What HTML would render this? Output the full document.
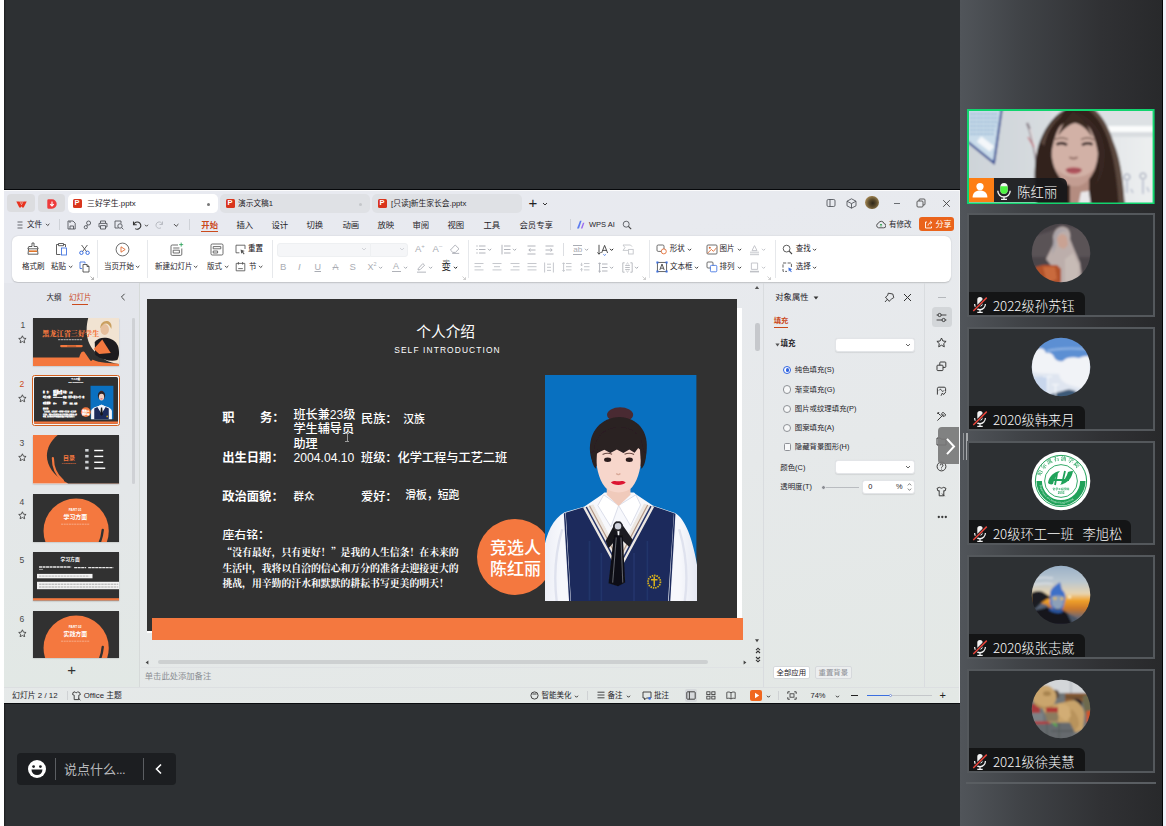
<!DOCTYPE html>
<html lang="zh-CN">
<head>
<meta charset="utf-8">
<title>会议</title>
<style>
*{box-sizing:border-box;margin:0;padding:0}
html,body{width:1166px;height:826px;overflow:hidden;background:#2d3033;font-family:"Liberation Sans","Noto Sans CJK SC",sans-serif;}
#root{position:relative;width:1166px;height:826px;overflow:hidden;background:#2d3033}
#root div,#root svg,#root span.a{position:absolute}
.t{white-space:nowrap}
#wps{left:4px;top:190px;width:955.6px;height:512.7px;overflow:hidden;border-top:1px solid #fbfbfc;border-right:1px solid #f1f2f3;background:linear-gradient(168deg,#e8eaf1 0%,#e8eaef 25%,#e6e9ea 60%,#e3e8e5 100%)}
#side{left:959.6px;top:0;width:202.4px;height:826px;background:linear-gradient(90deg,#51555a 0%,#404347 30%,#303134 70%,#28292b 100%)}
.tile{border:2px solid #54585c;background:#2d3033}
.nm{background:#141516;border-top-right-radius:6px}
</style>
</head>
<body>
<div id="root">
<div style="left:0px;top:0px;width:4px;height:826px;background:#fff;"></div>
<div style="left:4px;top:0px;width:2px;height:826px;background:linear-gradient(90deg,#1c1e20,#2d3033);"></div>
<div id="side">
</div>
<div style="left:1162px;top:0px;width:1px;height:826px;background:#050506;"></div>
<div style="left:1163px;top:0px;width:3px;height:826px;background:#eef1f9;"></div>
<div style="left:4px;top:188.7px;width:955.6px;height:1.3px;background:#06080b;"></div>
<div style="left:4px;top:702.7px;width:955.6px;height:1.3px;background:#0a0c0f;"></div>
<div id="wps"></div>
<div style="left:7px;top:194px;width:28px;height:18px;background:#dcdde0;border-radius:4px"></div>
<div style="left:38px;top:194px;width:27px;height:18px;background:#dcdde0;border-radius:4px"></div>
<div style="left:68px;top:194px;width:150px;height:19px;background:#fff;border-radius:5px"></div>
<div style="left:220px;top:194px;width:150px;height:19px;background:#dfe1e5;border-radius:5px"></div>
<div style="left:372px;top:194px;width:150px;height:19px;background:#dfe1e5;border-radius:5px"></div>
<svg style="left:16px;top:200.5px" width="11" height="7" viewBox="0 0 11 7"><path d="M0.3 0.4h3.2L5.5 4.2 7.5 0.4h3.2L7.7 6.6H6.2L5.5 5.2 4.8 6.6H3.3z" fill="#e8321e"/><path d="M3.6 0.4h3.8L5.5 3.6z" fill="#f0624e"/></svg>
<svg style="left:47.3px;top:199px" width="10" height="10" viewBox="0 0 10 10"><path d="M1.5 0.3h3.5a4.7 4.7 0 0 1 0 9.4H1.5A1.2 1.2 0 0 1 0.3 8.5V1.5A1.2 1.2 0 0 1 1.5 0.3z" fill="#ee3b3b"/><path d="M5 2.4v4.4M3.2 5.2 5 7 6.8 5.2" stroke="#fff" stroke-width="1.1" fill="none"/></svg>
<div style="left:73px;top:198.5px;width:9px;height:9px;background:#d9351c;border-radius:1.5px"></div><div class="t" style="left:74.6px;top:193.2px;height:20px;line-height:20px;font-size:7.5px;color:#fff;font-weight:700;">P</div>
<div class="t" style="left:87px;top:193.5px;height:20px;line-height:20px;font-size:7.9px;color:#1f2329;font-weight:400;">三好学生.pptx</div>
<div style="left:207px;top:202.5px;width:3px;height:3px;background:#777;border-radius:2px"></div>
<div style="left:226px;top:198.5px;width:9px;height:9px;background:#d9351c;border-radius:1.5px"></div><div class="t" style="left:227.6px;top:193.2px;height:20px;line-height:20px;font-size:7.5px;color:#fff;font-weight:700;">P</div>
<div class="t" style="left:238px;top:193.5px;height:20px;line-height:20px;font-size:7.7px;color:#1f2329;font-weight:400;">演示文稿1</div>
<div style="left:358.5px;top:202.5px;width:3px;height:3px;background:#c4c6ca;border-radius:2px"></div>
<div style="left:378px;top:198.5px;width:9px;height:9px;background:#d9351c;border-radius:1.5px"></div><div class="t" style="left:379.6px;top:193.2px;height:20px;line-height:20px;font-size:7.5px;color:#fff;font-weight:700;">P</div>
<div class="t" style="left:391px;top:193.5px;height:20px;line-height:20px;font-size:7.75px;color:#1f2329;font-weight:400;">[只读]新生家长会.pptx</div>
<div class="t" style="left:528.5px;top:192.5px;height:20px;line-height:20px;font-size:15px;color:#222;font-weight:400;">+</div>
<svg style="left:542.0px;top:201.5px" width="6" height="4" viewBox="0 0 6 4"><path d="M1 1.0 3.0 3.0 5 1.0" fill="none" stroke="#333" stroke-width="1"/></svg>
<svg style="left:826px;top:198px" width="10" height="10" viewBox="0 0 10 10"><rect x="1" y="1.5" width="8" height="7" rx="1.3" fill="none" stroke="#4c4f55" stroke-width="0.85"/><path d="M4 1.5v7" stroke="#4c4f55" stroke-width="0.85"/></svg>
<svg style="left:846px;top:197.5px" width="11" height="11" viewBox="0 0 11 11"><path d="M5.5 0.8 10 3.2v4.6L5.5 10.2 1 7.8V3.2z M1 3.2 5.5 5.6 10 3.2 M5.5 5.6v4.6" fill="none" stroke="#4c4f55" stroke-width="0.85"/></svg>
<div style="left:865.3px;top:195.8px;width:13.4px;height:13.4px;background:radial-gradient(circle at 55% 55%,#2e2618 0%,#5a4a2c 35%,#8a7348 60%,#d9a860 92%,#e8b56a 100%);border-radius:7px"></div>
<div style="left:894.3px;top:202.9px;width:6px;height:0.9px;background:#6a6d72;"></div>
<svg style="left:916px;top:198px" width="10" height="10" viewBox="0 0 10 10"><rect x="1" y="3" width="6" height="6" rx="1" fill="none" stroke="#444" stroke-width="0.85"/><path d="M3 3V2a1 1 0 0 1 1-1h4a1 1 0 0 1 1 1v4a1 1 0 0 1-1 1H7" fill="none" stroke="#444" stroke-width="0.85"/></svg>
<svg style="left:942px;top:199px" width="9" height="9" viewBox="0 0 9 9"><path d="M1.2 1.2l6.600 6.600M7.800 1.200 1.200 7.800" stroke="#3a3a3a" stroke-width="0.850"/></svg>
<svg style="left:17px;top:220.5px" width="6" height="8" viewBox="0 0 6 8"><path d="M0.5 1h5M0.5 4h5M0.5 7h5" stroke="#4c4f55" stroke-width="0.85"/></svg>
<div class="t" style="left:27px;top:214.5px;height:20px;line-height:20px;font-size:7.6px;color:#1f2329;font-weight:400;">文件</div>
<svg style="left:44.8px;top:223.3px" width="5.4" height="3.4" viewBox="0 0 5.4 3.4"><path d="M1 0.85 2.7 2.55 4.4 0.85" fill="none" stroke="#444" stroke-width="1"/></svg>
<div style="left:59px;top:219px;width:1px;height:11px;background:#cfd2d8;"></div>
<svg style="left:66.5px;top:219.5px" width="9" height="10" viewBox="0 0 9 10"><path d="M1 1h5l2.2 2.2V9H1z M3 9V6h3.5v3 M3 1v2" fill="none" stroke="#4c4f55" stroke-width="0.85"/></svg>
<svg style="left:83px;top:219.5px" width="9" height="10" viewBox="0 0 9 10"><circle cx="5.6" cy="3" r="2" fill="none" stroke="#4c4f55" stroke-width="0.85"/><circle cx="2.8" cy="7.2" r="1.6" fill="none" stroke="#4c4f55" stroke-width="0.85"/><path d="M4.6 4.8 3.8 6" stroke="#4c4f55" stroke-width="0.85"/></svg>
<svg style="left:98px;top:219.5px" width="10" height="10" viewBox="0 0 10 10"><path d="M2.5 3V1h5v2 M2.5 7H1V3.4h8V7H7.5 M2.5 5.6h5V9h-5z" fill="none" stroke="#4c4f55" stroke-width="0.85"/></svg>
<svg style="left:114px;top:219.5px" width="10" height="10" viewBox="0 0 10 10"><path d="M4.5 8H1V1h6v2.6" fill="none" stroke="#4c4f55" stroke-width="0.85"/><circle cx="6" cy="6" r="2.2" fill="none" stroke="#4c4f55" stroke-width="0.85"/><path d="M7.6 7.6 9.4 9.4" stroke="#4c4f55" stroke-width="0.85"/></svg>
<svg style="left:132px;top:219.5px" width="10" height="10" viewBox="0 0 10 10"><path d="M1.5 1.5v3.2h3.2 M1.8 4.4A3.6 3.6 0 1 1 3.2 8.6" fill="none" stroke="#333" stroke-width="1.1"/></svg>
<svg style="left:144.0px;top:223.5px" width="5" height="3" viewBox="0 0 5 3"><path d="M1 0.75 2.5 2.25 4 0.75" fill="none" stroke="#444" stroke-width="1"/></svg>
<svg style="left:155px;top:220px" width="9" height="9" viewBox="0 0 9 9"><path d="M7.5 1.5v3H4.5 M7.3 4.3A3.2 3.2 0 1 0 6 7.8" fill="none" stroke="#b9bcc3" stroke-width="1"/></svg>
<svg style="left:172.8px;top:222.8px" width="6.4" height="4.4" viewBox="0 0 6.4 4.4"><path d="M1 1.1 3.2 3.3000000000000003 5.4 1.1" fill="none" stroke="#444" stroke-width="1"/></svg>
<div style="left:189px;top:219px;width:1px;height:11px;background:#cfd2d8;"></div>
<div class="t" style="left:201.3px;top:214.5px;height:20px;line-height:20px;font-size:8.4px;color:#cb4a1c;font-weight:700;">开始</div>
<div style="left:201px;top:230.6px;width:17px;height:1.3px;background:#cb4a1c;"></div>
<div class="t" style="left:236.5px;top:214.5px;height:20px;line-height:20px;font-size:8.4px;color:#1f2329;font-weight:400;">插入</div>
<div class="t" style="left:271.5px;top:214.5px;height:20px;line-height:20px;font-size:8.4px;color:#1f2329;font-weight:400;">设计</div>
<div class="t" style="left:306.5px;top:214.5px;height:20px;line-height:20px;font-size:8.4px;color:#1f2329;font-weight:400;">切换</div>
<div class="t" style="left:342.5px;top:214.5px;height:20px;line-height:20px;font-size:8.4px;color:#1f2329;font-weight:400;">动画</div>
<div class="t" style="left:377.5px;top:214.5px;height:20px;line-height:20px;font-size:8.4px;color:#1f2329;font-weight:400;">放映</div>
<div class="t" style="left:412.5px;top:214.5px;height:20px;line-height:20px;font-size:8.4px;color:#1f2329;font-weight:400;">审阅</div>
<div class="t" style="left:447.5px;top:214.5px;height:20px;line-height:20px;font-size:8.4px;color:#1f2329;font-weight:400;">视图</div>
<div class="t" style="left:483.5px;top:214.5px;height:20px;line-height:20px;font-size:8.4px;color:#1f2329;font-weight:400;">工具</div>
<div class="t" style="left:519.5px;top:214.5px;height:20px;line-height:20px;font-size:8.4px;color:#1f2329;font-weight:400;">会员专享</div>
<div style="left:570px;top:219px;width:1px;height:11px;background:#cfd2d8;"></div>
<svg style="left:576px;top:220px" width="9" height="9" viewBox="0 0 9 9"><path d="M1 8.5 4 0.8h1.6L3 8.5z" fill="#5a7bf0"/><path d="M4.8 8.5 7 2.8h1.4L6.4 8.5z" fill="#9a6cf0"/></svg>
<div class="t" style="left:589px;top:214.5px;height:20px;line-height:20px;font-size:7.5px;color:#1f2329;font-weight:400;">WPS AI</div>
<svg style="left:622px;top:219.5px" width="10" height="10" viewBox="0 0 10 10"><circle cx="4.2" cy="4.2" r="3" fill="none" stroke="#4c4f55" stroke-width="0.85"/><path d="M6.4 6.4 9.2 9.2" stroke="#444" stroke-width="1.1"/></svg>
<svg style="left:876px;top:220px" width="10" height="9" viewBox="0 0 10 9"><path d="M2.6 7.8A2.3 2.3 0 0 1 2.4 3.3 2.9 2.9 0 0 1 8 3.6 2.1 2.1 0 0 1 7.6 7.8z" fill="none" stroke="#444" stroke-width="0.9"/><path d="M5 6.6V4.2M4 5.1 5 4.1 6 5.1" fill="none" stroke="#2a9d4a" stroke-width="0.9"/></svg>
<div class="t" style="left:889px;top:214.5px;height:20px;line-height:20px;font-size:7.5px;color:#1f2329;font-weight:400;">有修改</div>
<div style="left:918.7px;top:216.6px;width:35px;height:14.7px;background:#ea631b;border-radius:3px"></div>
<svg style="left:924px;top:220px" width="9" height="9" viewBox="0 0 9 9"><path d="M3 2H1.5v6h6V6.5 M4 5.6C4.3 3.6 5.6 2.6 7.6 2.6 M6.2 1 7.8 2.6 6.2 4.2" fill="none" stroke="#fff" stroke-width="0.9"/></svg>
<div class="t" style="left:935.5px;top:214.5px;height:20px;line-height:20px;font-size:8px;color:#fff;font-weight:400;">分享</div>
<div style="left:12px;top:236px;width:939px;height:46px;background:#fff;border-radius:6px;box-shadow:0 0.5px 1.5px rgba(0,0,0,.18)"></div>
<svg style="left:26px;top:242px" width="14" height="14" viewBox="0 0 14 14"><path d="M6 1h2v3.5h3.2l1 2.3H1.8l1-2.3H6z M2.6 6.8 2 12.2h10l-0.6-5.4" fill="none" stroke="#444" stroke-width="0.85"/><path d="M3 9.2h8" stroke="#e0762a" stroke-width="1.6"/></svg>
<div class="t" style="left:22px;top:256.8px;height:20px;line-height:20px;font-size:7.5px;color:#1f2329;font-weight:400;">格式刷</div>
<svg style="left:54px;top:242px" width="14" height="14" viewBox="0 0 14 14"><path d="M4.5 2.5H2.5v10h4 M9.5 2.5h2V5 M4.5 1.5h5v2.2h-5z" fill="none" stroke="#444" stroke-width="0.85"/><rect x="7.5" y="6" width="5" height="7" fill="none" stroke="#3b6fe0" stroke-width="0.85"/></svg>
<div class="t" style="left:51px;top:256.8px;height:20px;line-height:20px;font-size:7.5px;color:#1f2329;font-weight:400;">粘贴</div>
<svg style="left:67.8px;top:265.40000000000003px" width="5.4" height="3.4" viewBox="0 0 5.4 3.4"><path d="M1 0.85 2.7 2.55 4.4 0.85" fill="none" stroke="#444" stroke-width="1"/></svg>
<svg style="left:79px;top:243.5px" width="11" height="11" viewBox="0 0 11 11"><path d="M2.6 1 7.8 8 M8.4 1 3.2 8" stroke="#444" stroke-width="0.85" fill="none"/><circle cx="2.4" cy="8.8" r="1.7" fill="none" stroke="#3b6fe0"/><circle cx="8.6" cy="8.8" r="1.7" fill="none" stroke="#3b6fe0"/></svg>
<svg style="left:79px;top:261px" width="11" height="12" viewBox="0 0 11 12"><path d="M3 7.5H1V1h5v1.6" fill="none" stroke="#3b6fe0" stroke-width="0.85"/><path d="M4 3.5h4l2 2V11H4z M8 3.5v2h2" fill="none" stroke="#444" stroke-width="0.85"/></svg>
<svg style="left:90px;top:276px" width="4" height="4" viewBox="0 0 4 4"><path d="M0.5 0.5 3.5 3.5 M3.5 1.2v2.3H1.2" stroke="#999" stroke-width="0.7" fill="none"/></svg>
<div style="left:97px;top:240px;width:1px;height:38px;background:#e6e8eb;"></div>
<svg style="left:114.5px;top:241.5px" width="15" height="15" viewBox="0 0 15 15"><circle cx="7.5" cy="7.5" r="6.4" fill="none" stroke="#555" stroke-width="0.85"/><path d="M6 4.8 10.2 7.5 6 10.2z" fill="none" stroke="#e0662a" stroke-width="0.85"/></svg>
<div class="t" style="left:104px;top:256.8px;height:20px;line-height:20px;font-size:7.5px;color:#1f2329;font-weight:400;">当页开始</div>
<svg style="left:134.9px;top:265.40000000000003px" width="5.4" height="3.4" viewBox="0 0 5.4 3.4"><path d="M1 0.85 2.7 2.55 4.4 0.85" fill="none" stroke="#444" stroke-width="1"/></svg>
<div style="left:147px;top:240px;width:1px;height:38px;background:#e6e8eb;"></div>
<svg style="left:170px;top:241.5px" width="14" height="15" viewBox="0 0 14 15"><path d="M8 3H2.2A1.2 1.2 0 0 0 1 4.2v8A1.2 1.2 0 0 0 2.2 13.4h8.4a1.2 1.2 0 0 0 1.2-1.2V6.5" fill="none" stroke="#555" stroke-width="0.85"/><path d="M3.2 6h6.2M3.2 8.2h6.2v2.8H3.2z" fill="none" stroke="#555" stroke-width="0.85"/><path d="M11.2 0.6v4M9.2 2.6h4" stroke="#2aa05a" stroke-width="0.85"/></svg>
<div class="t" style="left:155px;top:256.8px;height:20px;line-height:20px;font-size:7.5px;color:#1f2329;font-weight:400;">新建幻灯片</div>
<svg style="left:192.8px;top:265.40000000000003px" width="5.4" height="3.4" viewBox="0 0 5.4 3.4"><path d="M1 0.85 2.7 2.55 4.4 0.85" fill="none" stroke="#444" stroke-width="1"/></svg>
<svg style="left:210px;top:242.5px" width="14" height="13" viewBox="0 0 14 13"><rect x="1" y="1" width="12" height="11" rx="1.3" fill="none" stroke="#555" stroke-width="0.85"/><path d="M3.2 3.6h7.6v2.2H3.2z M3.2 8h4.4v2H3.2z" fill="none" stroke="#555" stroke-width="0.85"/></svg>
<div class="t" style="left:207px;top:256.8px;height:20px;line-height:20px;font-size:7.5px;color:#1f2329;font-weight:400;">版式</div>
<svg style="left:223.8px;top:265.40000000000003px" width="5.4" height="3.4" viewBox="0 0 5.4 3.4"><path d="M1 0.85 2.7 2.55 4.4 0.85" fill="none" stroke="#444" stroke-width="1"/></svg>
<svg style="left:235px;top:243.5px" width="11" height="11" viewBox="0 0 11 11"><path d="M10 5V1.2H1v7.6h3.4" fill="none" stroke="#555" stroke-width="0.85"/><path d="M5.6 5.4 9.8 7 8 7.8 9.6 9.8 8.8 10.4 7.2 8.4 6.2 9.8z" fill="#555"/></svg>
<div class="t" style="left:248px;top:239.3px;height:20px;line-height:20px;font-size:7.5px;color:#1f2329;font-weight:500;">重置</div>
<svg style="left:235px;top:261px" width="11" height="11" viewBox="0 0 11 11"><path d="M1.2 2.4h8.6v7.4H1.2z M3.4 1v2.6 M7.6 1v2.6 M3.2 7.6h4.6" fill="none" stroke="#555" stroke-width="0.85"/></svg>
<div class="t" style="left:249px;top:256.8px;height:20px;line-height:20px;font-size:7.5px;color:#1f2329;font-weight:400;">节</div>
<svg style="left:258.3px;top:265.40000000000003px" width="5.4" height="3.4" viewBox="0 0 5.4 3.4"><path d="M1 0.85 2.7 2.55 4.4 0.85" fill="none" stroke="#444" stroke-width="1"/></svg>
<div style="left:271.5px;top:240px;width:1px;height:38px;background:#e6e8eb;"></div>
<div style="left:276.5px;top:242.5px;width:94px;height:14px;background:#f5f6f8;border:1px solid #eef0f2;border-radius:3px 0 0 3px"></div>
<div style="left:370px;top:242.5px;width:37.5px;height:14px;background:#f5f6f8;border:1px solid #eef0f2;border-radius:0 3px 3px 0"></div>
<svg style="left:361.3px;top:247.3px" width="6" height="4" viewBox="0 0 6 4"><path d="M1 1.0 3.0 3.0 5 1.0" fill="none" stroke="#d2d4d9" stroke-width="1"/></svg>
<svg style="left:398.5px;top:247.3px" width="6" height="4" viewBox="0 0 6 4"><path d="M1 1.0 3.0 3.0 5 1.0" fill="none" stroke="#d2d4d9" stroke-width="1"/></svg>
<div class="t" style="left:415px;top:239.3px;height:20px;line-height:20px;font-size:9.5px;color:#a9acb3;font-weight:400;">A</div>
<div class="t" style="left:421.2px;top:236.3px;height:20px;line-height:20px;font-size:6px;color:#a9acb3;font-weight:400;">+</div>
<div class="t" style="left:432.5px;top:239.3px;height:20px;line-height:20px;font-size:9.5px;color:#a9acb3;font-weight:400;">A</div>
<div class="t" style="left:439px;top:235.9px;height:20px;line-height:20px;font-size:6px;color:#a9acb3;font-weight:400;">–</div>
<svg style="left:448.5px;top:244px" width="11" height="10" viewBox="0 0 11 10"><path d="M6.2 1 10 4.8 6.4 8.4H3.8L1.4 6z M3.2 9.4h7" fill="none" stroke="#a9acb3" stroke-width="0.9"/></svg>
<div class="t" style="left:280px;top:256.8px;height:20px;line-height:20px;font-size:9.5px;color:#a9acb3;font-weight:400;">B</div>
<div class="t" style="left:298px;top:256.8px;height:20px;line-height:20px;font-size:9.5px;color:#a9acb3;font-weight:400;font-style:italic">I</div>
<div class="t" style="left:314.5px;top:256.8px;height:20px;line-height:20px;font-size:9px;color:#a9acb3;font-weight:400;text-decoration:underline">U</div>
<div class="t" style="left:332.5px;top:256.8px;height:20px;line-height:20px;font-size:9px;color:#a9acb3;font-weight:400;text-decoration:line-through">A</div>
<div class="t" style="left:349.6px;top:256.8px;height:20px;line-height:20px;font-size:9.5px;color:#a9acb3;font-weight:400;">S</div>
<div class="t" style="left:367.5px;top:256.8px;height:20px;line-height:20px;font-size:9px;color:#a9acb3;font-weight:400;">X</div>
<div class="t" style="left:373.6px;top:253.8px;height:20px;line-height:20px;font-size:5.5px;color:#a9acb3;font-weight:400;">2</div>
<svg style="left:378.4px;top:265.5px" width="5.2" height="3.2" viewBox="0 0 5.2 3.2"><path d="M1 0.8 2.6 2.4000000000000004 4.2 0.8" fill="none" stroke="#a9acb3" stroke-width="1"/></svg>
<div class="t" style="left:393px;top:256.0px;height:20px;line-height:20px;font-size:9px;color:#a9acb3;font-weight:400;">A</div>
<div style="left:391.5px;top:270.6px;width:9px;height:1.6px;background:#b0b2b8;"></div>
<svg style="left:402.9px;top:265.5px" width="5.2" height="3.2" viewBox="0 0 5.2 3.2"><path d="M1 0.8 2.6 2.4000000000000004 4.2 0.8" fill="none" stroke="#a9acb3" stroke-width="1"/></svg>
<svg style="left:416px;top:261.5px" width="11" height="11" viewBox="0 0 11 11"><path d="M2.4 6.4 6.8 1.6 8.6 3.2 4.2 7.6 2 8z" fill="none" stroke="#a9acb3" stroke-width="0.9"/><path d="M1 10.2h9" stroke="#c9cbd0" stroke-width="1.4"/></svg>
<svg style="left:428.0px;top:265.5px" width="5.2" height="3.2" viewBox="0 0 5.2 3.2"><path d="M1 0.8 2.6 2.4000000000000004 4.2 0.8" fill="none" stroke="#a9acb3" stroke-width="1"/></svg>
<div class="t" style="left:441.5px;top:256.8px;height:20px;line-height:20px;font-size:9.5px;color:#222;font-weight:400;">变</div>
<div class="t" style="left:443px;top:251.40000000000003px;height:20px;line-height:20px;font-size:3.6px;color:#222;font-weight:400;">wén</div>
<svg style="left:453.0px;top:265.5px" width="5.2" height="3.2" viewBox="0 0 5.2 3.2"><path d="M1 0.8 2.6 2.4000000000000004 4.2 0.8" fill="none" stroke="#222" stroke-width="1"/></svg>
<svg style="left:462px;top:276px" width="4" height="4" viewBox="0 0 4 4"><path d="M0.5 0.5 3.5 3.5 M3.5 1.2v2.3H1.2" stroke="#bbb" stroke-width="0.7" fill="none"/></svg>
<div style="left:467.5px;top:240px;width:1px;height:38px;background:#e6e8eb;"></div>
<svg style="left:475.5px;top:244px" width="10" height="11" viewBox="0 0 10 11"><path d="M3 2h6.5M3 5.5h6.5M3 9h6.5" stroke="#a9acb3" stroke-width="0.9"/><path d="M0.4 2h1.2M0.4 5.5h1.2M0.4 9h1.2" stroke="#a9acb3" stroke-width="1.2"/></svg>
<svg style="left:487.4px;top:247.70000000000002px" width="5.2" height="3.2" viewBox="0 0 5.2 3.2"><path d="M1 0.8 2.6 2.4000000000000004 4.2 0.8" fill="none" stroke="#a9acb3" stroke-width="1"/></svg>
<svg style="left:500.5px;top:244px" width="10" height="11" viewBox="0 0 10 11"><path d="M3 2h6.5M3 5.5h6.5M3 9h6.5" stroke="#a9acb3" stroke-width="0.9"/><path d="M1 0.8v9.6" stroke="#a9acb3" stroke-width="0.9"/></svg>
<svg style="left:512.1px;top:247.70000000000002px" width="5.2" height="3.2" viewBox="0 0 5.2 3.2"><path d="M1 0.8 2.6 2.4000000000000004 4.2 0.8" fill="none" stroke="#a9acb3" stroke-width="1"/></svg>
<svg style="left:527px;top:244.5px" width="9" height="10" viewBox="0 0 9 10"><path d="M0.5 1h8M0.5 9h8M2 5h6.5M3.4 3.4 1.8 5 3.4 6.6" stroke="#a9acb3" stroke-width="0.9" fill="none"/></svg>
<svg style="left:544.6px;top:244.5px" width="9" height="10" viewBox="0 0 9 10"><path d="M0.5 1h8M0.5 9h8M0.5 5h6.5M5.6 3.4 7.2 5 5.6 6.6" stroke="#a9acb3" stroke-width="0.9" fill="none"/></svg>
<div style="left:562.5px;top:243px;width:1px;height:12.5px;background:#dcdee2;"></div>
<div class="t" style="left:573.2px;top:239.60000000000002px;height:20px;line-height:20px;font-size:8px;color:#a9acb3;font-weight:400;">ab</div>
<div style="left:573px;top:245px;width:9px;height:0.9px;background:#a9acb3;"></div>
<div style="left:573px;top:254px;width:9px;height:0.9px;background:#a9acb3;"></div>
<svg style="left:584.1999999999999px;top:247.70000000000002px" width="5.2" height="3.2" viewBox="0 0 5.2 3.2"><path d="M1 0.8 2.6 2.4000000000000004 4.2 0.8" fill="none" stroke="#a9acb3" stroke-width="1"/></svg>
<svg style="left:597px;top:243.5px" width="12" height="12" viewBox="0 0 12 12"><path d="M2 0.8v9.4M0.4 8.4 2 10.2 3.6 8.4" stroke="#333" stroke-width="0.85" fill="none"/><path d="M4.6 9 7.6 1.4 10.6 9M5.6 6.4h4" stroke="#333" stroke-width="0.85" fill="none"/><path d="M6.4 10.4 7.6 11.4 8.8 10.4" stroke="#3b6fe0" stroke-width="0.9" fill="none"/></svg>
<svg style="left:609.1999999999999px;top:247.70000000000002px" width="5.2" height="3.2" viewBox="0 0 5.2 3.2"><path d="M1 0.8 2.6 2.4000000000000004 4.2 0.8" fill="none" stroke="#222" stroke-width="1"/></svg>
<svg style="left:621.5px;top:244px" width="12" height="11" viewBox="0 0 12 11"><path d="M1 1h7.5L10 2.6 M1 1l2 2.6L1 6.4h5" stroke="#c3c5ca" stroke-width="0.9" fill="none"/><rect x="6.6" y="5.4" width="4.6" height="4.6" fill="none" stroke="#c3c5ca" stroke-width="0.9"/></svg>
<svg style="left:474.4px;top:262px" width="10" height="10" viewBox="0 0 10 10"><path d="M0.5 1.5h9M0.5 4.7h6.5M0.5 7.9h9" stroke="#c0c2c7" stroke-width="0.9"/></svg>
<svg style="left:492px;top:262px" width="10" height="10" viewBox="0 0 10 10"><path d="M0.5 1.5h9M2 4.7h6M0.5 7.9h9" stroke="#c0c2c7" stroke-width="0.9"/></svg>
<svg style="left:509.5px;top:262px" width="10" height="10" viewBox="0 0 10 10"><path d="M0.5 1.5h9M3 4.7h6.5M0.5 7.9h9" stroke="#c0c2c7" stroke-width="0.9"/></svg>
<svg style="left:527px;top:262px" width="10" height="10" viewBox="0 0 10 10"><path d="M0.5 1.5h9M0.5 4.7h9M0.5 7.9h9" stroke="#c0c2c7" stroke-width="0.9"/></svg>
<svg style="left:544px;top:261.5px" width="10" height="11" viewBox="0 0 10 11"><path d="M0.6 0.5v10M9.4 0.5v10M3 2.2h4M3 8.4h4M3 5.3h4" stroke="#c0c2c7" stroke-width="0.9" fill="none"/></svg>
<svg style="left:562px;top:262px" width="10" height="10" viewBox="0 0 10 10"><path d="M4 1.5h5.5M4 4.7h5.5M4 7.9h5.5M1.6 0.8v8.6M0.4 2 1.6 0.8 2.8 2M0.4 8.2 1.6 9.4 2.8 8.2" stroke="#c0c2c7" stroke-width="0.9" fill="none"/></svg>
<svg style="left:579.5px;top:262px" width="10" height="10" viewBox="0 0 10 10"><path d="M4 1.5h5.5M4 4.7h5.5M4 7.9h5.5M1.6 0.8v3M1.6 6.4v3M0.4 2.6 1.6 3.8 2.8 2.6M0.4 7.6 1.6 6.4 2.8 7.6" stroke="#c0c2c7" stroke-width="0.9" fill="none"/></svg>
<svg style="left:597.5px;top:261.5px" width="10" height="11" viewBox="0 0 10 11"><path d="M4 2h5.5M4 5.5h5.5M4 9h5.5M1.6 0.8v9.4M0.4 2 1.6 0.8 2.8 2M0.4 9 1.6 10.2 2.8 9" stroke="#a9acb3" stroke-width="0.9" fill="none"/></svg>
<svg style="left:608.9px;top:265.5px" width="5.2" height="3.2" viewBox="0 0 5.2 3.2"><path d="M1 0.8 2.6 2.4000000000000004 4.2 0.8" fill="none" stroke="#a9acb3" stroke-width="1"/></svg>
<svg style="left:621.5px;top:261.5px" width="11" height="11" viewBox="0 0 11 11"><path d="M2.6 0.8H0.8v9.4h1.8M8.4 0.8h1.8v9.4H8.4M3.2 3.4h4.6M3.2 5.5h4.6M3.2 7.6h4.6M4.4 2 5.5 1 6.6 2M4.4 9 5.5 10 6.6 9" stroke="#a9acb3" stroke-width="0.8" fill="none"/></svg>
<svg style="left:634.0px;top:265.5px" width="5.2" height="3.2" viewBox="0 0 5.2 3.2"><path d="M1 0.8 2.6 2.4000000000000004 4.2 0.8" fill="none" stroke="#a9acb3" stroke-width="1"/></svg>
<svg style="left:642px;top:276px" width="4" height="4" viewBox="0 0 4 4"><path d="M0.5 0.5 3.5 3.5 M3.5 1.2v2.3H1.2" stroke="#bbb" stroke-width="0.7" fill="none"/></svg>
<div style="left:649px;top:240px;width:1px;height:38px;background:#e6e8eb;"></div>
<svg style="left:656px;top:243.5px" width="12" height="12" viewBox="0 0 12 12"><rect x="1" y="1" width="7" height="6.4" rx="1.2" fill="none" stroke="#555" stroke-width="0.85"/><circle cx="7.8" cy="7.4" r="2.5" fill="#fff" stroke="#e0662a" stroke-width="0.85"/></svg>
<div class="t" style="left:669.8px;top:239.3px;height:20px;line-height:20px;font-size:7.5px;color:#1f2329;font-weight:400;">形状</div>
<svg style="left:686.8px;top:248.00000000000003px" width="5.2" height="3.2" viewBox="0 0 5.2 3.2"><path d="M1 0.8 2.6 2.4000000000000004 4.2 0.8" fill="none" stroke="#444" stroke-width="1"/></svg>
<svg style="left:706px;top:244px" width="12" height="11" viewBox="0 0 12 11"><rect x="1" y="1" width="10" height="9" rx="1" fill="none" stroke="#555" stroke-width="0.85"/><circle cx="3.8" cy="3.8" r="1" fill="#e0662a"/><path d="M1.4 9.4 5.4 5.4 7.4 7.4 10.6 3.6" fill="none" stroke="#e0662a" stroke-width="0.85"/></svg>
<div class="t" style="left:719.6px;top:239.3px;height:20px;line-height:20px;font-size:7.5px;color:#1f2329;font-weight:400;">图片</div>
<svg style="left:736.8px;top:248.00000000000003px" width="5.2" height="3.2" viewBox="0 0 5.2 3.2"><path d="M1 0.8 2.6 2.4000000000000004 4.2 0.8" fill="none" stroke="#444" stroke-width="1"/></svg>
<svg style="left:748.5px;top:243.5px" width="11" height="12" viewBox="0 0 11 12"><path d="M3 6.6 5.5 1.6 8 6.6z" fill="none" stroke="#bfc1c6" stroke-width="0.9"/><path d="M1 8.2h9" stroke="#bfc1c6" stroke-width="0.9"/><path d="M1 10.4h9" stroke="#cfd1d5" stroke-width="1.6"/></svg>
<svg style="left:761.1999999999999px;top:248.00000000000003px" width="5.2" height="3.2" viewBox="0 0 5.2 3.2"><path d="M1 0.8 2.6 2.4000000000000004 4.2 0.8" fill="none" stroke="#c3c5ca" stroke-width="1"/></svg>
<svg style="left:656px;top:261px" width="12" height="12" viewBox="0 0 12 12"><rect x="1.4" y="1.4" width="9.2" height="9.2" fill="none" stroke="#555" stroke-width="0.9"/><path d="M3.8 9 6 3l2.2 6M4.6 7.2h2.8" fill="none" stroke="#444" stroke-width="0.9"/><path d="M0.4 0.4h2v2h-2zM9.6 0.4h2v2h-2zM0.4 9.6h2v2h-2zM9.6 9.6h2v2h-2z" fill="#3b6fe0"/></svg>
<div class="t" style="left:670px;top:256.8px;height:20px;line-height:20px;font-size:7.5px;color:#1f2329;font-weight:400;">文本框</div>
<svg style="left:694.1999999999999px;top:265.5px" width="5.2" height="3.2" viewBox="0 0 5.2 3.2"><path d="M1 0.8 2.6 2.4000000000000004 4.2 0.8" fill="none" stroke="#444" stroke-width="1"/></svg>
<svg style="left:706px;top:261px" width="12" height="12" viewBox="0 0 12 12"><rect x="1" y="1" width="6" height="6" rx="1" fill="none" stroke="#555" stroke-width="0.85"/><rect x="4.4" y="4.4" width="6.4" height="6.4" rx="1" fill="#fff" stroke="#3b6fe0" stroke-width="0.85"/></svg>
<div class="t" style="left:719.6px;top:256.8px;height:20px;line-height:20px;font-size:7.5px;color:#1f2329;font-weight:400;">排列</div>
<svg style="left:736.8px;top:265.5px" width="5.2" height="3.2" viewBox="0 0 5.2 3.2"><path d="M1 0.8 2.6 2.4000000000000004 4.2 0.8" fill="none" stroke="#444" stroke-width="1"/></svg>
<svg style="left:748.5px;top:261.5px" width="11" height="11" viewBox="0 0 11 11"><path d="M2.4 1h6.2v6.4H2.4z" fill="none" stroke="#bfc1c6" stroke-width="0.9"/><path d="M1 9.6h9" stroke="#bfc1c6" stroke-width="1.6"/></svg>
<svg style="left:761.1999999999999px;top:265.5px" width="5.2" height="3.2" viewBox="0 0 5.2 3.2"><path d="M1 0.8 2.6 2.4000000000000004 4.2 0.8" fill="none" stroke="#c3c5ca" stroke-width="1"/></svg>
<svg style="left:767px;top:276px" width="4" height="4" viewBox="0 0 4 4"><path d="M0.5 0.5 3.5 3.5 M3.5 1.2v2.3H1.2" stroke="#bbb" stroke-width="0.7" fill="none"/></svg>
<div style="left:774.5px;top:240px;width:1px;height:38px;background:#e6e8eb;"></div>
<svg style="left:782px;top:244px" width="11" height="11" viewBox="0 0 11 11"><circle cx="4.6" cy="4.6" r="3.4" fill="none" stroke="#444" stroke-width="0.85"/><path d="M7.2 7.2 10 10" stroke="#444" stroke-width="1.1"/></svg>
<div class="t" style="left:795.7px;top:239.3px;height:20px;line-height:20px;font-size:7.5px;color:#1f2329;font-weight:400;">查找</div>
<svg style="left:811.9px;top:248.00000000000003px" width="5.2" height="3.2" viewBox="0 0 5.2 3.2"><path d="M1 0.8 2.6 2.4000000000000004 4.2 0.8" fill="none" stroke="#444" stroke-width="1"/></svg>
<svg style="left:782px;top:261.5px" width="11" height="11" viewBox="0 0 11 11"><path d="M9.4 5V1H1v8.4h4" fill="none" stroke="#444" stroke-width="0.85" stroke-dasharray="3.2 1.4"/><path d="M6.4 5.6 10.2 7.2 8.6 7.9 9.8 9.8 9 10.3 7.8 8.4 6.8 9.6z" fill="#3b6fe0"/></svg>
<div class="t" style="left:795.7px;top:256.8px;height:20px;line-height:20px;font-size:7.5px;color:#1f2329;font-weight:400;">选择</div>
<svg style="left:811.9px;top:265.5px" width="5.2" height="3.2" viewBox="0 0 5.2 3.2"><path d="M1 0.8 2.6 2.4000000000000004 4.2 0.8" fill="none" stroke="#444" stroke-width="1"/></svg>
<div style="left:4px;top:283px;width:135.5px;height:404px;background:linear-gradient(180deg,#e4e6ec 0%,#e4e7e9 50%,#e2e8e5 100%);"></div>
<div style="left:139.2px;top:283px;width:0.9px;height:404px;background:#d6dad9;"></div>
<div class="t" style="left:46.5px;top:287.5px;height:20px;line-height:20px;font-size:7.5px;color:#1f2329;font-weight:400;">大纲</div>
<div class="t" style="left:69px;top:287.5px;height:20px;line-height:20px;font-size:7.5px;color:#cb4a1c;font-weight:400;">幻灯片</div>
<div style="left:72px;top:303.8px;width:16px;height:1.2px;background:#cb4a1c;"></div>
<svg style="left:119.5px;top:293px" width="6" height="8" viewBox="0 0 6 8"><path d="M4.6 0.8 1.4 4 4.6 7.2" fill="none" stroke="#444" stroke-width="1"/></svg>
<div style="left:132px;top:317.5px;width:2.6px;height:166.5px;background:#cfd1d5;border-radius:1.3px"></div>
<svg style="left:33px;top:317.5px;box-shadow:0 0.5px 1.5px rgba(0,0,0,.25)" width="86.3" height="48.3" viewBox="0 0 86 48.3" preserveAspectRatio="none"><rect width="86" height="48.4" fill="#313131"/><path d="M55 0C52 12 53 24 61 33 68 41 76 45 86 46V0z" fill="#f1e3d2"/><path d="M0 39.5h46c1-3 2-6 4-6 3 0 5 5 9 8 8 4 18 3 27 4.5v8.4H0z" fill="#f4783f"/><path d="M52.5 33.5 58 41.5M58 33 64 40.5M63 33 69 39.5" stroke="#313131" stroke-width="2.6" fill="none" stroke-linecap="round"/><path d="M61.5 24c3-4 8-5 13-4 5 1 9 4 10.5 9 1.5 6 0.5 10-1 13-6 2-14 0-22-5z" fill="#1d1b1f"/><ellipse cx="71.5" cy="11.5" rx="4.2" ry="5.4" fill="#e6bf9d"/><path d="M67 10.5c0-5 3-8 7-7.5 3.5 0.5 5 4 4 8-1-3-3-5.5-5-5.5-2.5 0-4.5 2-6 5z" fill="#caa060"/><path d="M60.5 31 69 21.5 77.5 35 66 36z" fill="#f4783f"/><path d="M66 36c6 1 12 1 17-1l1 4c-6 2-13 2-19 0z" fill="#1d1b1f"/><text x="37.7" y="18.1" font-size="7" font-weight="900" fill="#f4783f" text-anchor="middle" font-family='"Liberation Serif","Noto Serif CJK SC",serif' letter-spacing="0.1">黑龙江省三好学生</text><path d="M25 21.7h24" stroke="#c9c9c9" stroke-width="0.9" stroke-dasharray="2.2 0.5"/><rect x="27" y="27" width="22.6" height="2.2" rx="1.1" fill="#f4783f"/><path d="M34 28.1h9" stroke="#7a3a1c" stroke-width="0.6"/></svg>
<div class="t" style="left:20.5px;top:315.1px;height:20px;line-height:20px;font-size:8.5px;color:#4a4a4a;font-weight:400;">1</div>
<svg style="left:18px;top:334.8px" width="8.8" height="8.8" viewBox="0 0 10 10"><path d="M5 0.9 6.25 3.6 9.2 3.95 7 5.95 7.6 8.85 5 7.4 2.4 8.85 3 5.95 0.8 3.95 3.75 3.6z" fill="none" stroke="#333" stroke-width="0.9" stroke-linejoin="round"/></svg>
<div style="left:31.6px;top:374.9px;width:88.6px;height:51.2px;background:#f6f6f6;border:1.4px solid #d4611f;border-radius:2.5px"></div>
<svg style="left:33.8px;top:377.2px;border-radius:1.5px" width="84.4" height="46.8" viewBox="0 0 86 48.4" preserveAspectRatio="none"><rect width="86" height="48.4" fill="#313131"/><rect x="0" y="46" width="86" height="2.4" fill="#f4783f"/><rect x="57.6" y="9.1" width="23.3" height="34.5" fill="#0a70c0"/><ellipse cx="68.8" cy="15.6" rx="2" ry="1.3" fill="#4a2b31"/><ellipse cx="68.8" cy="19.2" rx="3.7" ry="4.3" fill="#2b2226"/><ellipse cx="68.8" cy="20.8" rx="2.7" ry="3.5" fill="#efcfc2"/><path d="M67.8 22.6h2" stroke="#d2283a" stroke-width="0.7"/><path d="M58.2 43.6v-8.5c0.8-3 4.6-4.2 7.6-5l3-1.6 3 1.6c3 0.8 6.8 2 7.6 5v8.5z" fill="#f3f4f9"/><path d="M61.4 43.6v-11l3.2-1.6 4.2 7 4.2-7 3.2 1.6v11z" fill="#1b2a5a"/><path d="M65 30.6 68.8 37 72.6 30.6 70.8 29.4H66.8z" fill="#f3f4f9"/><path d="M68.2 31.5h1.3l0.7 7.5-1.4 1.2-1.3-1.2z" fill="#16161a"/><circle cx="74.6" cy="40.8" r="0.9" fill="#c9a21c"/><circle cx="52.8" cy="36.4" r="5" fill="#f4783f"/><g fill="#fff" font-weight="700" stroke="#fff" stroke-width="0.22" paint-order="stroke"><text x="42.4" y="3.3" font-size="2.3" text-anchor="middle" font-weight="400">个人介绍</text><text x="42.6" y="5.8" font-size="1.15" text-anchor="middle" font-weight="400" letter-spacing="0.18" fill="#ddd">SELF INTRODUCTION</text><text x="9.2" y="16.1" font-size="1.85">职　务：</text><text x="19.7" y="15.6" font-size="1.8">班长兼23级</text><text x="19.7" y="17.8" font-size="1.8">学生辅导员</text><text x="19.7" y="19.9" font-size="1.8">助理</text><text x="29.6" y="16.1" font-size="1.8">民族：</text><text x="36" y="16.1" font-size="1.6">汉族</text><text x="9.2" y="22.1" font-size="1.85">出生日期：</text><text x="19.7" y="22.1" font-size="1.8">2004.04.10</text><text x="29.6" y="22.1" font-size="1.8">班级：化学工程与工艺二班</text><text x="9.2" y="28.1" font-size="1.85">政治面貌：</text><text x="19.7" y="28.1" font-size="1.6">群众</text><text x="29.6" y="28.1" font-size="1.8">爱好：</text><text x="36.2" y="27.6" font-size="1.6">滑板，短跑</text><text x="9.2" y="33.2" font-size="1.75">座右铭：</text><g font-family='"Liberation Serif","Noto Serif CJK SC",serif' font-size="1.46"><text x="9.8" y="36.5">“没有最好，只有更好！”是我的人生信条！在未来的</text><text x="9.2" y="38.9">生活中，我将以自洽的信心和万分的准备去迎接更大的</text><text x="9.2" y="41.1">挑战，用辛勤的汗水和默默的耕耘书写更美的明天！</text></g><text x="52.8" y="35.9" font-size="2.5" text-anchor="middle" font-weight="500">竞选人</text><text x="52.8" y="38.9" font-size="2.5" text-anchor="middle" font-weight="500">陈红丽</text></g></svg>
<div class="t" style="left:19.5px;top:374.3px;height:20px;line-height:20px;font-size:8.5px;color:#cb4a1c;font-weight:400;">2</div>
<svg style="left:18px;top:394.0px" width="8.8" height="8.8" viewBox="0 0 10 10"><path d="M5 0.9 6.25 3.6 9.2 3.95 7 5.95 7.6 8.85 5 7.4 2.4 8.85 3 5.95 0.8 3.95 3.75 3.6z" fill="none" stroke="#333" stroke-width="0.9" stroke-linejoin="round"/></svg>
<svg style="left:33px;top:435.2px;box-shadow:0 0.5px 1.5px rgba(0,0,0,.25)" width="86.3" height="48.6" viewBox="0 0 86 48.6" preserveAspectRatio="none"><rect width="86" height="48.4" fill="#f4783f"/><path d="M24.6 0H86v48.4H35C10 36 8 14 24.6 0z" fill="#313131"/><path d="M19.8 23C19.8 32 23 40 29.8 45.6" stroke="#f4783f" stroke-width="2.2" fill="none" stroke-linecap="round"/><text x="35.8" y="25.4" font-size="6" font-weight="700" fill="#f4783f" text-anchor="middle">目录</text><text x="35.8" y="28.6" font-size="2.3" font-weight="700" fill="#f4783f" text-anchor="middle" letter-spacing="0.2">CONTENTS</text><rect x="52" y="14.0" width="3.4" height="2.6" fill="#cfd3d6"/><rect x="61" y="14.8" width="9" height="1.4" fill="#fff"/><rect x="52" y="19.9" width="3.4" height="2.6" fill="#cfd3d6"/><rect x="61" y="20.700000000000003" width="9" height="1.4" fill="#fff"/><rect x="52" y="25.8" width="3.4" height="2.6" fill="#cfd3d6"/><rect x="61" y="26.6" width="9" height="1.4" fill="#fff"/><rect x="52" y="31.700000000000003" width="3.4" height="2.6" fill="#cfd3d6"/><rect x="61" y="32.5" width="11" height="1.4" fill="#fff"/></svg>
<div class="t" style="left:19.5px;top:432.8px;height:20px;line-height:20px;font-size:8.5px;color:#4a4a4a;font-weight:400;">3</div>
<svg style="left:18px;top:452.5px" width="8.8" height="8.8" viewBox="0 0 10 10"><path d="M5 0.9 6.25 3.6 9.2 3.95 7 5.95 7.6 8.85 5 7.4 2.4 8.85 3 5.95 0.8 3.95 3.75 3.6z" fill="none" stroke="#333" stroke-width="0.9" stroke-linejoin="round"/></svg>
<svg style="left:33px;top:494.1px;box-shadow:0 0.5px 1.5px rgba(0,0,0,.25)" width="86.3" height="48.3" viewBox="0 0 86 48.3" preserveAspectRatio="none"><rect width="86" height="48.4" fill="#313131"/><circle cx="43" cy="37" r="32.5" fill="#f4783f"/><path d="M69.5 36c-0.5 5-1.5 9-3 12.4" stroke="#313131" stroke-width="2.4" fill="none" stroke-linecap="round"/><text x="42" y="16.6" font-size="3.2" font-weight="700" fill="#fff" text-anchor="middle">PART 01</text><text x="42.2" y="25.4" font-size="5.9" font-weight="700" fill="#fff" text-anchor="middle">学习方面</text><path d="M28 30.2h28.5" stroke="#fbd0b8" stroke-width="0.6" stroke-dasharray="2 0.6"/></svg>
<div class="t" style="left:19.5px;top:491.70000000000005px;height:20px;line-height:20px;font-size:8.5px;color:#4a4a4a;font-weight:400;">4</div>
<svg style="left:18px;top:511.40000000000003px" width="8.8" height="8.8" viewBox="0 0 10 10"><path d="M5 0.9 6.25 3.6 9.2 3.95 7 5.95 7.6 8.85 5 7.4 2.4 8.85 3 5.95 0.8 3.95 3.75 3.6z" fill="none" stroke="#333" stroke-width="0.9" stroke-linejoin="round"/></svg>
<svg style="left:33px;top:552.4px;box-shadow:0 0.5px 1.5px rgba(0,0,0,.25)" width="86.3" height="48.3" viewBox="0 0 86 48.3" preserveAspectRatio="none"><rect width="86" height="48.4" fill="#313131"/><rect x="0" y="46.2" width="86" height="2.2" fill="#f4783f"/><text x="37" y="8.6" font-size="4.8" font-weight="700" fill="#fff" text-anchor="middle">学习方面</text><path d="M6 15h32M41 15.6h12M55 15.6h25" stroke="#e6e6e6" stroke-width="1.4" stroke-dasharray="3 0.5"/><path d="M6 17.4h4" stroke="#bbb" stroke-width="0.8"/><rect x="4" y="21.9" width="55.3" height="4.4" fill="#f4f4f4"/><path d="M6 24.1h50" stroke="#888" stroke-width="0.6" stroke-dasharray="2.5 0.6"/><rect x="4" y="29.8" width="82" height="7.4" fill="#f4f4f4"/><path d="M6 32.2h79M6 35h79" stroke="#888" stroke-width="0.7" stroke-dasharray="2.5 0.6"/></svg>
<div class="t" style="left:19.5px;top:550.0px;height:20px;line-height:20px;font-size:8.5px;color:#4a4a4a;font-weight:400;">5</div>
<svg style="left:33px;top:611.2px;box-shadow:0 0.5px 1.5px rgba(0,0,0,.25)" width="86.3" height="46.8" viewBox="0 0 86 46.8" preserveAspectRatio="none"><rect width="86" height="48.4" fill="#313131"/><circle cx="43" cy="37" r="32.5" fill="#f4783f"/><path d="M69.5 36c-0.5 5-1.5 9-3 12.4" stroke="#313131" stroke-width="2.4" fill="none" stroke-linecap="round"/><text x="42" y="16.6" font-size="3.2" font-weight="700" fill="#fff" text-anchor="middle">PART 02</text><text x="42.2" y="25.4" font-size="5.9" font-weight="700" fill="#fff" text-anchor="middle">实践方面</text><path d="M28 30.2h28.5" stroke="#fbd0b8" stroke-width="0.6" stroke-dasharray="2 0.6"/></svg>
<div class="t" style="left:19.5px;top:608.8000000000001px;height:20px;line-height:20px;font-size:8.5px;color:#4a4a4a;font-weight:400;">6</div>
<svg style="left:18px;top:628.5px" width="8.8" height="8.8" viewBox="0 0 10 10"><path d="M5 0.9 6.25 3.6 9.2 3.95 7 5.95 7.6 8.85 5 7.4 2.4 8.85 3 5.95 0.8 3.95 3.75 3.6z" fill="none" stroke="#333" stroke-width="0.9" stroke-linejoin="round"/></svg>
<div class="t" style="left:67.2px;top:660.0px;height:20px;line-height:20px;font-size:15px;color:#333;font-weight:400;">+</div>
<div style="left:147.25px;top:307.5px;width:595px;height:325px;background:#fff;"></div>
<div style="left:147.25px;top:299px;width:589.7px;height:332.2px;background:#313131;"></div>
<div style="left:152.1px;top:617.7px;width:590.8px;height:22.4px;background:#f4783f;"></div>
<div class="t" style="left:416.3px;top:322.2px;height:20px;line-height:20px;font-size:14.7px;color:#fff;font-weight:400;">个人介绍</div>
<div class="t" style="left:394.2px;top:340.2px;height:20px;line-height:20px;font-size:8.4px;color:#fff;font-weight:400;letter-spacing:1.12px">SELF INTRODUCTION</div>
<div class="t" style="left:222.2px;top:407.8px;height:20px;line-height:20px;font-size:12.3px;color:#fff;font-weight:700;">职</div>
<div class="t" style="left:260px;top:407.8px;height:20px;line-height:20px;font-size:12.3px;color:#fff;font-weight:700;">务：</div>
<div class="t" style="left:293.5px;top:404.5px;height:20px;line-height:20px;font-size:12.1px;color:#fff;font-weight:500;">班长兼23级</div>
<div class="t" style="left:293.5px;top:419.4px;height:20px;line-height:20px;font-size:12.1px;color:#fff;font-weight:500;">学生辅导员</div>
<div class="t" style="left:293.5px;top:434.2px;height:20px;line-height:20px;font-size:12.1px;color:#fff;font-weight:500;">助理</div>
<div class="t" style="left:361px;top:408.5px;height:20px;line-height:20px;font-size:12.2px;color:#fff;font-weight:500;">民族：</div>
<div class="t" style="left:403.3px;top:408.5px;height:20px;line-height:20px;font-size:10.8px;color:#fff;font-weight:500;">汉族</div>
<div class="t" style="left:222.2px;top:447.6px;height:20px;line-height:20px;font-size:12.3px;color:#fff;font-weight:700;">出生日期：</div>
<div class="t" style="left:293.5px;top:448.0px;height:20px;line-height:20px;font-size:12.15px;color:#fff;font-weight:400;">2004.04.10</div>
<div class="t" style="left:361px;top:447.6px;height:20px;line-height:20px;font-size:12.2px;color:#fff;font-weight:500;">班级：化学工程与工艺二班</div>
<div class="t" style="left:222.2px;top:486.8px;height:20px;line-height:20px;font-size:12.3px;color:#fff;font-weight:700;">政治面貌：</div>
<div class="t" style="left:293.5px;top:487.0px;height:20px;line-height:20px;font-size:10.4px;color:#fff;font-weight:500;">群众</div>
<div class="t" style="left:361px;top:486.8px;height:20px;line-height:20px;font-size:12.2px;color:#fff;font-weight:500;">爱好：</div>
<div class="t" style="left:405.2px;top:484.5px;height:20px;line-height:20px;font-size:10.85px;color:#fff;font-weight:500;">滑板，短跑</div>
<div class="t" style="left:222.4px;top:524.8px;height:20px;line-height:20px;font-size:11.9px;color:#fff;font-weight:500;">座右铭：</div>
<div class="t" style="left:222.4px;top:541.8px;height:20px;line-height:20px;font-size:9.86px;color:#fff;font-weight:700;font-family:'Liberation Serif','Noto Serif CJK SC',serif;"><span style="font-family:'Noto Serif CJK SC',serif">“</span>没有最好，只有更好！<span style="font-family:'Noto Serif CJK SC',serif">”</span>是我的人生信条！在未来的</div>
<div class="t" style="left:222.4px;top:558.5px;height:20px;line-height:20px;font-size:9.86px;color:#fff;font-weight:700;font-family:'Liberation Serif','Noto Serif CJK SC',serif;">生活中，我将以自洽的信心和万分的准备去迎接更大的</div>
<div class="t" style="left:222.4px;top:574.2px;height:20px;line-height:20px;font-size:9.86px;color:#fff;font-weight:700;font-family:'Liberation Serif','Noto Serif CJK SC',serif;">挑战，用辛勤的汗水和默默的耕耘书写更美的明天！</div>
<div style="left:477.1px;top:518.6px;width:76px;height:76px;background:#f4783f;border-radius:38px"></div>
<div class="t" style="left:490px;top:539.0px;height:20px;line-height:20px;font-size:17px;color:#fff;font-weight:500;">竞选人</div>
<div class="t" style="left:490px;top:559.6px;height:20px;line-height:20px;font-size:17px;color:#fff;font-weight:500;">陈红丽</div>
<svg style="left:545.400px;top:374.800px" width="151.400" height="226" viewBox="0 0 510 762" preserveAspectRatio="none"><defs><filter id="phb" x="-5%" y="-5%" width="110%" height="110%"><feGaussianBlur stdDeviation="1.800"/></filter><linearGradient id="slv" x1="0" y1="0" x2="1" y2="0"><stop offset="0" stop-color="#eceef6"/><stop offset="0.120" stop-color="#f7f8fc"/><stop offset="0.880" stop-color="#f7f8fc"/><stop offset="1" stop-color="#e4e7f2"/></linearGradient></defs><rect width="510" height="762" fill="#0870c0"/><g filter="url(#phb)"><path d="M-6 770V600C4 530 28 485 66 463L133 443 200 398H300L363 440 438 465C472 485 497 545 516 660V770z" fill="url(#slv)"/><path d="M40 770C30 690 34 600 58 520" stroke="#dfe2ee" stroke-width="8" fill="none"/><path d="M470 770C482 690 476 600 452 520" stroke="#dfe2ee" stroke-width="8" fill="none"/><path d="M83 770 66 465 133 445 248 657 363 442 438 467 418 770z" fill="#1a2a5c"/><path d="M60 468 70 465 88 770H78z" fill="#f3f4fa"/><path d="M444 470 434 467 414 770h10z" fill="#f3f4fa"/><path d="M66 466 84 770" stroke="#1a2a5c" stroke-width="5"/><path d="M437 468 419 770" stroke="#1a2a5c" stroke-width="5"/><path d="M150 560v200M190 600v170M300 600v170M345 560v200" stroke="#22346a" stroke-width="6"/><path d="M128 447 248 668 368 444 333 433 248 600 163 436z" fill="#ece7e2"/><path d="M139 445 248 646 357 442" fill="none" stroke="#27356a" stroke-width="5"/><path d="M150 441 248 624 346 438" fill="none" stroke="#b59886" stroke-width="4"/><path d="M163 436 248 600 333 433 300 396H200z" fill="#f7f8fc"/><path d="M198 404 248 440 222 512 178 440z" fill="#fff" stroke="#cfd3e2" stroke-width="2.500"/><path d="M306 404 248 440 288 508 322 438z" fill="#fff" stroke="#cfd3e2" stroke-width="2.500"/><path d="M208 360h80v44l-40 38-40-38z" fill="#f0cabb"/><path d="M240 492 204 560 214 584 246 548z" fill="#15151a"/><path d="M252 492 296 556 284 580 250 548z" fill="#1b1b21"/><path d="M232 540 262 540 270 700 246 712 214 702z" fill="#111116"/><path d="M240 548 228 700M256 548 262 700" stroke="#7d808c" stroke-width="2.500"/><circle cx="246" cy="510" r="14" fill="#cfd2dc" stroke="#25252b" stroke-width="6"/><circle cx="368" cy="697" r="21" fill="none" stroke="#d9b21c" stroke-width="6" stroke-dasharray="5 3"/><path d="M357 690h22M368 680v32" stroke="#d9b21c" stroke-width="5"/><ellipse cx="253" cy="134" rx="44" ry="25" fill="#4a2b31"/><path d="M152 262C146 190 190 144 250 142 312 144 352 190 342 262 338 296 326 308 320 308L176 308C164 302 156 290 152 262z" fill="#2a2024"/><path d="M172 254C174 214 212 198 248 198 284 198 324 214 324 254 326 306 316 350 294 378 274 402 222 402 202 378 180 350 170 306 172 254z" fill="#f7d6cb"/><path d="M164 276C162 200 212 174 250 176 292 176 336 200 332 276 328 262 322 252 314 246L302 262 284 251 264 263 242 251 220 263 200 252C184 258 172 266 164 276z" fill="#2a2024"/><path d="M156 262c0 34 8 48 16 54l4-66z" fill="#2a2024"/><path d="M340 262c0 34-8 48-16 54l-4-66z" fill="#2a2024"/><ellipse cx="211" cy="286" rx="12" ry="7.500" fill="#2a1a1c"/><ellipse cx="284" cy="286" rx="12" ry="7.500" fill="#2a1a1c"/><path d="M194 268c10-5 22-5 32-1M268 267c10-4 22-4 32 1" stroke="#6a4a44" stroke-width="4" fill="none"/><path d="M240 332c4 4 10 4 14 0" stroke="#d9a898" stroke-width="4" fill="none"/><path d="M222 362c10-8 18-4 25-4 7 0 15-4 25 4-8 12-42 12-50 0z" fill="#dc1430"/></g></svg>
<div style="left:346.6px;top:433.5px;width:0.8px;height:8px;background:#9a9a9a;"></div>
<div style="left:345.2px;top:433.3px;width:3.6px;height:0.7px;background:#9a9a9a;"></div>
<div style="left:345.2px;top:441px;width:3.6px;height:0.7px;background:#9a9a9a;"></div>
<div style="left:755.4px;top:323px;width:4.4px;height:27.6px;background:#c6c8cc;border-radius:2.2px"></div>
<svg style="left:754.4px;top:285px" width="6" height="5" viewBox="0 0 6 5"><path d="M3 1 5.2 4H0.8z" fill="#555"/></svg>
<svg style="left:754.4px;top:637.6px" width="6" height="5" viewBox="0 0 6 5"><path d="M1 1.2h4L3 4.2z" fill="#444"/></svg>
<svg style="left:754.5px;top:646.5px" width="6" height="7" viewBox="0 0 6 7"><path d="M1 3.2 3 1.2 5 3.2M1 6 3 4 5 6" fill="none" stroke="#333" stroke-width="1.1"/></svg>
<svg style="left:754.5px;top:656px" width="6" height="7" viewBox="0 0 6 7"><path d="M1 1 3 3 5 1M1 3.8 3 5.8 5 3.8" fill="none" stroke="#333" stroke-width="1.1"/></svg>
<svg style="left:144.6px;top:660px" width="4" height="5" viewBox="0 0 4 5"><path d="M3.4 0.6v3.8L0.6 2.5z" fill="#444"/></svg>
<svg style="left:743.2px;top:660px" width="4" height="5" viewBox="0 0 4 5"><path d="M0.6 0.6v3.8L3.4 2.5z" fill="#444"/></svg>
<div style="left:157.5px;top:660.3px;width:550.4px;height:4.2px;background:#cdd0d1;border-radius:2px"></div>
<div style="left:140.5px;top:667px;width:622px;height:1px;background:#dfe2e4;"></div>
<div class="t" style="left:144.8px;top:666.4px;height:20px;line-height:20px;font-size:8.3px;color:#8b8e93;font-weight:400;">单击此处添加备注</div>
<div style="left:762.5px;top:283px;width:1px;height:404px;background:#d9dcdf;"></div>
<div class="t" style="left:775.3px;top:287.4px;height:20px;line-height:20px;font-size:8.3px;color:#1f2329;font-weight:400;">对象属性</div>
<svg style="left:812.5px;top:296px" width="6" height="4" viewBox="0 0 6 4"><path d="M0.6 0.6h4.8L3 3.4z" fill="#333"/></svg>
<svg style="left:884px;top:292px" width="11" height="11" viewBox="0 0 11 11"><path d="M4.2 1.2 8.8 2 9.8 5.6 7.8 6.8 5 9.4 3 6.6 1.4 5.4 3.8 3.2z" fill="none" stroke="#333" stroke-width="0.9" stroke-linejoin="round"/><path d="M3.6 7 1 10" stroke="#333" stroke-width="0.9"/></svg>
<svg style="left:903px;top:293px" width="9" height="9" viewBox="0 0 9 9"><path d="M1 1l7 7M8 1 1 8" stroke="#333" stroke-width="1"/></svg>
<div class="t" style="left:773.7px;top:311.0px;height:20px;line-height:20px;font-size:7.4px;color:#cb4a1c;font-weight:700;">填充</div>
<div style="left:773.7px;top:327.3px;width:14.4px;height:1.2px;background:#cb4a1c;"></div>
<svg style="left:774.5px;top:342.5px" width="5" height="4" viewBox="0 0 5 4"><path d="M0.4 0.5h4.2L2.5 3.6z" fill="#555"/></svg>
<div class="t" style="left:780.5px;top:334.4px;height:20px;line-height:20px;font-size:7.5px;color:#1f2329;font-weight:700;">填充</div>
<div style="left:834.6px;top:337.5px;width:80.6px;height:14.4px;background:#fff;border:1px solid #e3e5e8;border-radius:3px;box-shadow:0 0.5px 1px rgba(0,0,0,.08)"></div>
<svg style="left:904.5px;top:343.0px" width="6" height="4" viewBox="0 0 6 4"><path d="M1 1.0 3.0 3.0 5 1.0" fill="none" stroke="#666" stroke-width="1"/></svg>
<div style="left:783.3px;top:365.7px;width:8.2px;height:8.2px;background:#fff;border:1px solid #2f63e0;border-radius:5px"></div>
<div style="left:785.6px;top:368.0px;width:3.6px;height:3.6px;background:#2f63e0;border-radius:2px"></div>
<div class="t" style="left:794.8px;top:360.0px;height:20px;line-height:20px;font-size:7.4px;color:#1f2329;font-weight:400;">纯色填充(S)</div>
<div style="left:783.3px;top:385.4px;width:8.2px;height:8.2px;background:#f6f7f8;border:0.9px solid #8e9196;border-radius:5px"></div>
<div class="t" style="left:794.8px;top:379.7px;height:20px;line-height:20px;font-size:7.4px;color:#1f2329;font-weight:400;">渐变填充(G)</div>
<div style="left:783.3px;top:404.5px;width:8.2px;height:8.2px;background:#f6f7f8;border:0.9px solid #8e9196;border-radius:5px"></div>
<div class="t" style="left:794.8px;top:398.8px;height:20px;line-height:20px;font-size:7.4px;color:#1f2329;font-weight:400;">图片或纹理填充(P)</div>
<div style="left:783.3px;top:423.7px;width:8.2px;height:8.2px;background:#f6f7f8;border:0.9px solid #8e9196;border-radius:5px"></div>
<div class="t" style="left:794.8px;top:418.0px;height:20px;line-height:20px;font-size:7.4px;color:#1f2329;font-weight:400;">图案填充(A)</div>
<div style="left:783.6px;top:443.2px;width:7.8px;height:7.8px;background:#f8f9fa;border:0.9px solid #8e9196;border-radius:1.5px"></div>
<div class="t" style="left:794.8px;top:437.4px;height:20px;line-height:20px;font-size:7.4px;color:#1f2329;font-weight:400;">隐藏背景图形(H)</div>
<div class="t" style="left:780.3px;top:457.6px;height:20px;line-height:20px;font-size:7.4px;color:#1f2329;font-weight:400;">颜色(C)</div>
<div style="left:834.6px;top:459.7px;width:80.6px;height:14.6px;background:#fff;border:1px solid #e3e5e8;border-radius:3px;box-shadow:0 0.5px 1px rgba(0,0,0,.08)"></div>
<svg style="left:904.5px;top:465.2px" width="6" height="4" viewBox="0 0 6 4"><path d="M1 1.0 3.0 3.0 5 1.0" fill="none" stroke="#666" stroke-width="1"/></svg>
<div class="t" style="left:780.3px;top:477.2px;height:20px;line-height:20px;font-size:7.4px;color:#1f2329;font-weight:400;">透明度(T)</div>
<div style="left:822px;top:486.6px;width:37px;height:0.9px;background:#b9bcc0;"></div>
<div style="left:820.6px;top:484.6px;width:5px;height:5px;background:#8b8e93;border-radius:3px;border:1.3px solid #e9ebed"></div>
<div style="left:861.8px;top:480.2px;width:53.4px;height:13.6px;background:#fff;border:1px solid #e3e5e8;border-radius:3px;box-shadow:0 0.5px 1px rgba(0,0,0,.08)"></div>
<div class="t" style="left:868.3px;top:477.2px;height:20px;line-height:20px;font-size:7.4px;color:#1f2329;font-weight:400;">0</div>
<div class="t" style="left:896px;top:477.2px;height:20px;line-height:20px;font-size:7.4px;color:#1f2329;font-weight:400;">%</div>
<svg style="left:907px;top:482px" width="5" height="10" viewBox="0 0 5 10"><path d="M0.8 3.4 2.5 1.6 4.2 3.4M0.8 6.6 2.5 8.4 4.2 6.6" fill="none" stroke="#666" stroke-width="0.8"/></svg>
<div style="left:773px;top:666.3px;width:36.5px;height:13px;background:#fff;border:0.8px solid #d6d9dc;border-radius:2px"></div>
<div class="t" style="left:776.5px;top:662.9px;height:20px;line-height:20px;font-size:7.4px;color:#1f2329;font-weight:400;">全部应用</div>
<div style="left:815px;top:666.3px;width:36.5px;height:13px;background:#eceeef;border:0.8px solid #d6d9dc;border-radius:2px"></div>
<div class="t" style="left:818.5px;top:662.9px;height:20px;line-height:20px;font-size:7.4px;color:#8d9096;font-weight:400;">重置背景</div>
<div style="left:924px;top:283px;width:1px;height:404px;background:#d9dcdf;"></div>
<div style="left:938px;top:297px;width:7.5px;height:1px;background:#b5b8bc;"></div>
<div style="left:932px;top:307.2px;width:19.8px;height:19.8px;background:#d3d6d9;border-radius:3.5px"></div>
<svg style="left:936.3px;top:311.5px" width="11" height="11" viewBox="0 0 11 11"><path d="M0.6 3h9.8M0.6 8h9.8" stroke="#333" stroke-width="0.9"/><circle cx="3.6" cy="3" r="1.6" fill="#d3d6d9" stroke="#333" stroke-width="0.9"/><circle cx="7.6" cy="8" r="1.6" fill="#d3d6d9" stroke="#333" stroke-width="0.9"/></svg>
<svg style="left:936.3px;top:337px" width="11" height="11" viewBox="0 0 11 11"><path d="M5.5 1 6.9 4 10.1 4.4 7.7 6.6 8.3 9.8 5.5 8.2 2.7 9.8 3.3 6.6 0.9 4.4 4.1 4z" fill="none" stroke="#333" stroke-width="0.95" stroke-linejoin="round"/></svg>
<svg style="left:936.3px;top:361px" width="11" height="11" viewBox="0 0 11 11"><rect x="3.8" y="1" width="6" height="5.4" rx="0.8" fill="none" stroke="#333" stroke-width="0.95"/><rect x="1" y="4.2" width="6" height="5.4" rx="0.8" fill="#e6e8ea" stroke="#333" stroke-width="0.95"/></svg>
<svg style="left:936.3px;top:386px" width="11" height="11" viewBox="0 0 11 11"><path d="M1.4 8.6V2.6A1.4 1.4 0 0 1 2.8 1.2h5.4A1.4 1.4 0 0 1 9.6 2.6v3" fill="none" stroke="#333" stroke-width="0.95"/><path d="M3 4.4c1-1.4 2-1.4 2.6 0s1.6 1.4 2.4 0M5 9.8 6.4 7l1.2 1.6L9.8 6" fill="none" stroke="#333" stroke-width="0.9"/></svg>
<svg style="left:936.3px;top:410.5px" width="11" height="11" viewBox="0 0 11 11"><path d="M1.4 9.6 6.4 4.6M5 3.2 7.8 6M7 1.2 9.8 4 8.6 5.2 5.8 2.4zM1.6 1.6l3 3M1.2 3l2-2" fill="none" stroke="#333" stroke-width="0.95"/></svg>
<svg style="left:936.3px;top:435.5px" width="11" height="11" viewBox="0 0 11 11"><path d="M1 2h3.4l1 1.2H10V9H1z" fill="none" stroke="#333" stroke-width="0.95"/></svg>
<svg style="left:936.3px;top:461px" width="11" height="11" viewBox="0 0 11 11"><circle cx="5.5" cy="5.5" r="4.4" fill="none" stroke="#333" stroke-width="0.95"/><path d="M4.2 4.4a1.4 1.4 0 1 1 1.9 1.3c-0.5 0.2-0.6 0.5-0.6 1" fill="none" stroke="#333" stroke-width="0.9"/><circle cx="5.5" cy="8" r="0.5" fill="#333"/></svg>
<svg style="left:936.3px;top:485.5px" width="11" height="11" viewBox="0 0 11 11"><path d="M1 2.4 3.6 1.2c0.5 1.3 3.3 1.3 3.8 0L10 2.4 9 5 7.8 4.6V9.8H3.2V4.6L2 5z" fill="none" stroke="#333" stroke-width="0.95" stroke-linejoin="round"/><path d="M6 7.6 8.6 10.2" stroke="#333" stroke-width="0.9"/></svg>
<svg style="left:936.5px;top:514.5px" width="11" height="4" viewBox="0 0 11 4"><circle cx="1.8" cy="2" r="1.15" fill="#3a3a3a"/><circle cx="5.3" cy="2" r="1.15" fill="#3a3a3a"/><circle cx="8.8" cy="2" r="1.15" fill="#3a3a3a"/></svg>
<div style="left:938.3px;top:427.2px;width:21px;height:37.3px;background:rgba(120,120,120,.92);border-radius:4px 0 0 4px"></div>
<svg style="left:944.5px;top:436.5px" width="11" height="19" viewBox="0 0 11 19"><path d="M2 1.8 9 9.5 2 17.2" fill="none" stroke="#fff" stroke-width="2"/></svg>
<div style="left:962.9px;top:433px;width:1.1px;height:26.5px;background:#94979a;"></div>
<div style="left:965.9px;top:433px;width:1.7px;height:26.5px;background:#a6a9ac;"></div>
<div style="left:4px;top:686.5px;width:955px;height:1px;background:#dcdfe1;"></div>
<div class="t" style="left:12px;top:686.1px;height:20px;line-height:20px;font-size:7.9px;color:#1f2329;font-weight:400;">幻灯片 2 / 12</div>
<div style="left:66.5px;top:690.5px;width:1px;height:9.5px;background:#cfd2d4;"></div>
<svg style="left:72px;top:690.5px" width="9" height="10" viewBox="0 0 9 10"><path d="M1 1.5 3 0.8c0.4 1.2 2.2 1.2 2.6 0L7.6 1.5 8.4 3.6 6.8 4.2V8.6H2.2V4.2L0.6 3.6z" fill="none" stroke="#333" stroke-width="0.9"/><path d="M6.2 7 8.4 9.2" stroke="#333" stroke-width="0.9"/></svg>
<div class="t" style="left:83.8px;top:686.1px;height:20px;line-height:20px;font-size:7.8px;color:#1f2329;font-weight:400;">Office 主题</div>
<svg style="left:530px;top:690.8px" width="9" height="9" viewBox="0 0 9 9"><circle cx="4.5" cy="4.5" r="3.6" fill="none" stroke="#333" stroke-width="0.9"/><path d="M2.4 3h4.2" stroke="#333" stroke-width="0.9"/></svg>
<div class="t" style="left:541.5px;top:686.1px;height:20px;line-height:20px;font-size:7.5px;color:#1f2329;font-weight:400;">智能美化</div>
<svg style="left:574.0px;top:694.9px" width="5" height="3" viewBox="0 0 5 3"><path d="M1 0.75 2.5 2.25 4 0.75" fill="none" stroke="#333" stroke-width="1"/></svg>
<div style="left:586.5px;top:690.5px;width:1px;height:9.5px;background:#cfd2d4;"></div>
<svg style="left:596.5px;top:691.3px" width="8" height="8" viewBox="0 0 8 8"><path d="M0.5 1.2h7M0.5 4h7M0.5 6.8h7" stroke="#333" stroke-width="0.9"/></svg>
<div class="t" style="left:607.5px;top:686.1px;height:20px;line-height:20px;font-size:7.5px;color:#1f2329;font-weight:400;">备注</div>
<svg style="left:625.5px;top:694.9px" width="5" height="3" viewBox="0 0 5 3"><path d="M1 0.75 2.5 2.25 4 0.75" fill="none" stroke="#333" stroke-width="1"/></svg>
<svg style="left:641.5px;top:690.8px" width="10" height="10" viewBox="0 0 10 10"><path d="M1 1h8v6H4.4L2.6 8.8V7H1z" fill="none" stroke="#333" stroke-width="0.9"/><circle cx="7.6" cy="7.4" r="1.3" fill="#3b6fe0"/></svg>
<div class="t" style="left:654px;top:686.1px;height:20px;line-height:20px;font-size:7.5px;color:#1f2329;font-weight:400;">批注</div>
<div style="left:684.5px;top:689px;width:12.5px;height:12.5px;background:#d6d9dc;border-radius:2px"></div>
<svg style="left:686px;top:690.8px" width="10" height="9" viewBox="0 0 10 9"><rect x="0.8" y="0.8" width="8.4" height="7.4" rx="0.8" fill="none" stroke="#333" stroke-width="0.9"/><path d="M3.4 0.8v7.4" stroke="#333" stroke-width="0.9"/></svg>
<svg style="left:706px;top:690.8px" width="10" height="9" viewBox="0 0 10 9"><rect x="0.8" y="0.8" width="3.2" height="2.8" fill="none" stroke="#333" stroke-width="0.8"/><rect x="5.8" y="0.8" width="3.2" height="2.8" fill="none" stroke="#333" stroke-width="0.8"/><rect x="0.8" y="5.2" width="3.2" height="2.8" fill="none" stroke="#333" stroke-width="0.8"/><rect x="5.8" y="5.2" width="3.2" height="2.8" fill="none" stroke="#333" stroke-width="0.8"/></svg>
<svg style="left:726px;top:690.8px" width="10" height="9" viewBox="0 0 10 9"><path d="M5 1.8C3.8 0.8 2 0.8 0.8 1.4v6.2C2 7 3.8 7 5 8 6.2 7 8 7 9.2 7.6V1.4C8 0.8 6.2 0.8 5 1.8zM5 1.8V8" fill="none" stroke="#333" stroke-width="0.8"/></svg>
<div style="left:750px;top:689.5px;width:12px;height:11.5px;background:#f0671f;border-radius:2px"></div>
<svg style="left:753.5px;top:692px" width="6" height="7" viewBox="0 0 6 7"><path d="M1 0.8 5.2 3.5 1 6.2z" fill="#fff"/></svg>
<svg style="left:766.2px;top:694.9px" width="5" height="3" viewBox="0 0 5 3"><path d="M1 0.75 2.5 2.25 4 0.75" fill="none" stroke="#333" stroke-width="1"/></svg>
<div style="left:778px;top:690.5px;width:1px;height:9.5px;background:#cfd2d4;"></div>
<svg style="left:786.5px;top:690.8px" width="10" height="9" viewBox="0 0 10 9"><path d="M0.8 2.8V0.8h2M7.2 0.8h2v2M9.2 6.2v2h-2M2.8 8.2h-2v-2" fill="none" stroke="#333" stroke-width="0.9"/><rect x="3" y="2.8" width="4" height="3.4" fill="none" stroke="#333" stroke-width="0.8"/></svg>
<div class="t" style="left:810.5px;top:686.1px;height:20px;line-height:20px;font-size:7.5px;color:#1f2329;font-weight:400;">74%</div>
<svg style="left:834.5px;top:694.9px" width="5" height="3" viewBox="0 0 5 3"><path d="M1 0.75 2.5 2.25 4 0.75" fill="none" stroke="#333" stroke-width="1"/></svg>
<div style="left:850.5px;top:694.8px;width:7px;height:1.2px;background:#222;"></div>
<div style="left:866.5px;top:694.8px;width:23.5px;height:1.2px;background:#3b6fe0;"></div>
<div style="left:890px;top:695px;width:42px;height:0.8px;background:#c4c7ca;"></div>
<div style="left:888.5px;top:693.8px;width:3.2px;height:3.2px;background:#fff;border-radius:2px;border:0.8px solid #7b93d8"></div>
<div class="t" style="left:939.5px;top:685.0px;height:20px;line-height:20px;font-size:11px;color:#222;font-weight:400;">+</div>
<svg style="left:967.4px;top:108.5px" width="187.6" height="95.5" viewBox="0 0 187.6 95.5"><defs><linearGradient id="wall" x1="0" y1="0" x2="1" y2="0"><stop offset="0" stop-color="#cdd3d8"/><stop offset="0.4" stop-color="#d6dbdf"/><stop offset="0.8" stop-color="#e6e9eb"/><stop offset="1" stop-color="#eef0f1"/></linearGradient><filter id="vb" x="-5%" y="-5%" width="110%" height="110%"><feGaussianBlur stdDeviation="0.9"/></filter><clipPath id="vclip"><rect x="2" y="2" width="183.6" height="91.5"/></clipPath></defs><rect width="187.6" height="95.5" fill="#12d46f"/><g clip-path="url(#vclip)"><g filter="url(#vb)"><rect x="-4" y="-4" width="196" height="104" fill="url(#wall)"/><path d="M84 -2h106v19H84z" fill="#dde1e4"/><path d="M136 17h54v6h-50z" fill="#fbfcfc"/><path d="M140 23h50v5h-48z" fill="#d9dde0"/><path d="M-2 -2h37l-7.5 56L-2 32z" fill="#c9dcea"/><path d="M1 33 27 54 35 -2" fill="none" stroke="#27408e" stroke-width="2"/><path d="M3 5h28M3 9h27M3 13h27M3 17h26M3 21h25M3 25h24" stroke="#8fb0cf" stroke-width="1.4" stroke-dasharray="2.5 1"/><path d="M12 30l13 10" stroke="#f4f7fa" stroke-width="7"/><path d="M60 14c4 8 7 22 10 42" stroke="#8f848c" stroke-width="2.6" fill="none"/><path d="M63 20c3 8 5 18 8 34" stroke="#e9e2e4" stroke-width="1.6" fill="none"/><path d="M61 28l6 10" stroke="#c46a74" stroke-width="1.4"/><path d="M70 98C66 74 67 48 73 32 80 14 92 0 108 -3H122C132 4 141 18 145 32 150 46 154 62 158 98z" fill="#33241f"/><path d="M120 0c10 6 18 20 22 34 4 14 8 30 10 64h6c-2-34-6-52-12-66-4-14-12-28-22-34z" fill="#5a463c"/><path d="M74 34c4-12 12-24 24-32-8 10-16 22-19 36z" fill="#5a463c"/><path d="M103 70h19v28h-19z" fill="#b48c80"/><path d="M84.5 42C84 28 92 12 107 11 122 12 131 28 131 42 131 58 124 70 116 75 112 77.5 104 77.5 100 75 92 70 84.5 58 84.5 42z" fill="#d2b1a6"/><path d="M100 75c4 2.5 12 2.5 16 0 5-3 10-9 12.5-17-4 6-10 10-20.5 10-8 0-14-3-18-8 2 7 6 12 10 15z" fill="#c39d92"/><path d="M114 83 122 82 124 98H111z" fill="#e9e7ea"/><path d="M106 3C95 9 87 24 84 47 80 62 84 72 90 78 80 70 76 56 77 40 79 22 90 6 106 3z" fill="#33241f"/><path d="M106 3c12 5 22 19 25.5 44 3 14 0 24-5 31 9-8 12-22 11-38-2-18-14-34-31.5-37z" fill="#382822"/><path d="M106 3c-6 6-12 14-15 24 6-8 12-12 17-13 6 1 12 6 17 14-3-12-10-20-19-25z" fill="#3a2a24"/><path d="M89.5 35.5c3-1.6 7.5-1.6 10.5 0.5M115 36c3-2 7.5-2 10.5-0.5" stroke="#2e1f1d" stroke-width="2.6" fill="none"/><path d="M88 30.5c4-2 9-2 13 0M114 30.5c4-2 9-2 13 0.5" stroke="#6e554c" stroke-width="1.2" fill="none"/><path d="M102.5 48c1.5 2 6.5 2 8 0" stroke="#8f6a62" stroke-width="2" fill="none"/><path d="M98.5 60.5c3-3 13-3 16.5 0-1 6-15 6-16.5 0z" fill="#b65a62"/><path d="M99.5 61h14.5" stroke="#8c3e48" stroke-width="1"/><circle cx="160" cy="68" r="3" fill="none" stroke="#7f88a4" stroke-width="0.9"/><circle cx="176" cy="67" r="3" fill="none" stroke="#7f88a4" stroke-width="0.9"/><path d="M160 72v12M176 71v14M164 80l2 4M180 78l2 5" stroke="#8f97b4" stroke-width="0.9"/></g></g></svg>
<div style="left:969.4px;top:177.7px;width:24.6px;height:24.5px;background:#fd7e14;"></div>
<svg style="left:971.4px;top:181px" width="18" height="18" viewBox="0 0 18 18"><circle cx="9" cy="5.6" r="3.6" fill="#fff"/><path d="M1.6 16.4c0-4.4 3-6.8 7.4-6.8s7.4 2.4 7.4 6.8z" fill="#fff"/></svg>
<div style="left:994px;top:177.7px;width:73px;height:24.3px;background:rgba(24,24,26,.93);border-top-right-radius:6px"></div>
<svg style="left:996.4px;top:182.2px" width="16" height="18" viewBox="0 0 16 18"><rect x="4.4" y="1" width="7.2" height="10.8" rx="3.6" fill="#f4f4f4"/><path d="M4.4 4.2h7.2v4a3.6 3.6 0 0 1-7.2 0z" fill="#4df442"/><path d="M1.8 8.8a6.2 6.2 0 0 0 12.4 0M8 15v2.4M5 17.4h6" fill="none" stroke="#f2f2f2" stroke-width="1.4"/></svg>
<div class="t" style="left:1017.3px;top:182.9px;height:20px;line-height:20px;font-size:13.3px;color:#fff;font-weight:300;">陈红丽</div>
<div class="tile" style="left:967px;top:213.0px;width:188px;height:104.3px"></div>
<svg style="left:1031px;top:222.9px" width="60" height="60" viewBox="0 0 60 60"><clipPath id="av2"><circle cx="30" cy="30" r="29.3"/></clipPath><filter id="ab2" x="-10%" y="-10%" width="120%" height="120%"><feGaussianBlur stdDeviation="0.8"/></filter><g clip-path="url(#av2)"><g filter="url(#ab2)"><rect x="-5" y="-5" width="70" height="70" fill="#4b4449"/><path d="M0 14 20 8 30 2 50 6 60 16V34H0z" fill="#5a5257"/><path d="M22 14c1-7 6-11 11-10 5 1 7 6 6 12l4 10 6 14 2 16-16 6-10-2-2-14-8-10 8-16z" fill="#bcaeab"/><path d="M26 16c2-6 8-6 10-1l1 7-4 4-5-2z" fill="#c9a293"/><path d="M23 12c2-7 10-9 14-3-4-2-9-1-11 5l-1 10-4 8z" fill="#a9a3a8"/><path d="M4 44 12 42 26 42 30 46 30 60H10z" fill="#b1512b"/><path d="M12 44h12l2 12-10 4z" fill="#c96a3c"/><path d="M34 36 42 30 48 44 46 58 34 60z" fill="#c7bbb6"/></g></g></svg>
<div class="nm" style="left:969px;top:292.0px;width:116.4px;height:23.3px"></div>
<svg style="left:971px;top:295.4px" width="18" height="19" viewBox="0 0 16 16" preserveAspectRatio="none"><rect x="5.6" y="1.6" width="4.8" height="8" rx="2.4" fill="#f2f2f2"/><path d="M3.2 7.6a4.8 4.8 0 0 0 9.6 0M8 12.4V14.6M5.6 14.6h4.8" fill="none" stroke="#f2f2f2" stroke-width="1.1"/><path d="M2 13.4 14 2.2" stroke="#1b1c1e" stroke-width="2.6"/><path d="M2 13.4 14 2.2" stroke="#f0453a" stroke-width="1.2"/></svg>
<div class="t" style="left:993px;top:295.6px;height:20px;line-height:20px;font-size:13.3px;color:#fafafa;font-weight:300;font-family:'Noto Sans CJK SC','Liberation Sans',sans-serif;">2022级孙苏钰</div>
<div class="tile" style="left:967px;top:327.05px;width:188px;height:104.3px"></div>
<svg style="left:1031px;top:336.95px" width="60" height="60" viewBox="0 0 60 60"><clipPath id="av3"><circle cx="30" cy="30" r="29.3"/></clipPath><filter id="ab3" x="-10%" y="-10%" width="120%" height="120%"><feGaussianBlur stdDeviation="0.8"/></filter><g clip-path="url(#av3)"><g filter="url(#ab3)"><rect x="-5" y="-5" width="70" height="70" fill="#5b8fd3"/><path d="M16 14c10-3 24-3 40-2" stroke="#8fb4e4" stroke-width="2" fill="none"/><path d="M0 16 6 12c4-2 8 0 9 4 4-1 7 1 8 4 2 4 6 5 9 4 4-5 12-4 16-3 4-2 8-3 12-1v40H0z" fill="#f1f3f7"/><path d="M0 34c8 4 18 2 28 3 1 8 8 10 14 12 6 2 12 4 18 2v9H0z" fill="#dfe5f0"/><path d="M0 40c6 0 12 0 16-2l2 22H0z" fill="#c8d6ec"/><path d="M18 58c6-2 10-3 14-4 4-2 8-2 12 0l4 4v4H18z" fill="#3e5a78"/><path d="M16.5 40v18M24.5 48v12M12 39.6h9M21 47.6h7" stroke="#fff" stroke-width="0.8"/></g></g></svg>
<div class="nm" style="left:969px;top:406.05px;width:116.4px;height:23.3px"></div>
<svg style="left:971px;top:409.45000000000005px" width="18" height="19" viewBox="0 0 16 16" preserveAspectRatio="none"><rect x="5.6" y="1.6" width="4.8" height="8" rx="2.4" fill="#f2f2f2"/><path d="M3.2 7.6a4.8 4.8 0 0 0 9.6 0M8 12.4V14.6M5.6 14.6h4.8" fill="none" stroke="#f2f2f2" stroke-width="1.1"/><path d="M2 13.4 14 2.2" stroke="#1b1c1e" stroke-width="2.6"/><path d="M2 13.4 14 2.2" stroke="#f0453a" stroke-width="1.2"/></svg>
<div class="t" style="left:993px;top:409.65px;height:20px;line-height:20px;font-size:13.3px;color:#fafafa;font-weight:300;font-family:'Noto Sans CJK SC','Liberation Sans',sans-serif;">2020级韩来月</div>
<div class="tile" style="left:967px;top:441.1px;width:188px;height:104.3px"></div>
<svg style="left:1031px;top:451.0px" width="60" height="60" viewBox="0 0 60 60"><clipPath id="av4"><circle cx="30" cy="30" r="29.3"/></clipPath><filter id="ab4" x="-10%" y="-10%" width="120%" height="120%"><feGaussianBlur stdDeviation="0"/></filter><g clip-path="url(#av4)"><g filter="url(#ab4)"><rect width="60" height="60" fill="#fff"/><circle cx="30" cy="30" r="25.6" fill="none" stroke="#20a25a" stroke-width="1"/><circle cx="30" cy="30" r="16.4" fill="none" stroke="#20a25a" stroke-width="0.9"/><path d="M5.5 30a24.5 24.5 0 0 0 49 0h-5.4a19.1 19.1 0 0 1-38.2 0z" fill="#20a25a"/><path id="lgt" d="M9.4 30a20.6 20.6 0 0 1 41.2 0" fill="none"/><text font-size="5.4" font-weight="700" fill="#20a25a" font-family='"Liberation Serif","Noto Serif CJK SC",serif' letter-spacing="1.3"><textPath href="#lgt" startOffset="5">哈尔滨石油学院</textPath></text><path id="lgb" d="M8.6 31a21.4 21.4 0 0 0 42.8 0" fill="none"/><text font-size="2.7" fill="#dff3e6" font-family='"Liberation Serif",serif' letter-spacing="0.1"><textPath href="#lgb" startOffset="3">Department of Chemical Engineering</textPath></text><path d="M17 32c1-7 6-11 12-12-4 4-6 9-7 13-2 1-4 0-5-1z" fill="#20a25a"/><path d="M42 20c-1 7-5 12-13 14 4-4 7-9 8-13 2-1 4-1 5-1z" fill="#20a25a"/><path d="M26 23 24 34M34 20 31 33M22 29h16" stroke="#20a25a" stroke-width="1.8" fill="none"/><text x="30" y="38.6" font-size="2.8" fill="#20a25a" text-anchor="middle" font-weight="700">化学工程学院</text><text x="30" y="42.6" font-size="3" fill="#20a25a" text-anchor="middle" font-weight="700">2003</text></g></g></svg>
<div class="nm" style="left:969px;top:520.1px;width:162.4px;height:23.3px"></div>
<svg style="left:971px;top:523.5px" width="18" height="19" viewBox="0 0 16 16" preserveAspectRatio="none"><rect x="5.6" y="1.6" width="4.8" height="8" rx="2.4" fill="#f2f2f2"/><path d="M3.2 7.6a4.8 4.8 0 0 0 9.6 0M8 12.4V14.6M5.6 14.6h4.8" fill="none" stroke="#f2f2f2" stroke-width="1.1"/><path d="M2 13.4 14 2.2" stroke="#1b1c1e" stroke-width="2.6"/><path d="M2 13.4 14 2.2" stroke="#f0453a" stroke-width="1.2"/></svg>
<div class="t" style="left:993px;top:523.7px;height:20px;line-height:20px;font-size:13.3px;color:#fafafa;font-weight:300;font-family:'Noto Sans CJK SC','Liberation Sans',sans-serif;">20级环工一班<span style="letter-spacing:1.4px">&nbsp; </span>李旭松</div>
<div class="tile" style="left:967px;top:555.15px;width:188px;height:104.3px"></div>
<svg style="left:1031px;top:565.05px" width="60" height="60" viewBox="0 0 60 60"><clipPath id="av5"><circle cx="30" cy="30" r="29.3"/></clipPath><filter id="ab5" x="-10%" y="-10%" width="120%" height="120%"><feGaussianBlur stdDeviation="0.8"/></filter><g clip-path="url(#av5)"><g filter="url(#ab5)"><defs><linearGradient id="sky5" x1="0" y1="0" x2="0" y2="1"><stop offset="0" stop-color="#8fa9c4"/><stop offset="0.3" stop-color="#b9c6d0"/><stop offset="0.48" stop-color="#e8d4b0"/><stop offset="0.58" stop-color="#f0a028"/><stop offset="0.7" stop-color="#c9772c"/><stop offset="0.82" stop-color="#6d6a74"/><stop offset="1" stop-color="#2b3140"/></linearGradient></defs><rect x="-5" y="-5" width="70" height="70" fill="url(#sky5)"/><path d="M0 14c8-2 14-2 22-1M2 20c8-2 14-2 20-1" stroke="#d7dde4" stroke-width="1.6" fill="none"/><circle cx="38.5" cy="32" r="1.4" fill="#fff6d0"/><path d="M30 44 44 52 52 58 40 60H20z" fill="#4b5666"/><path d="M0 38c6-1 10 0 16 2l4 6H0z" fill="#566274"/><path d="M0 28c4-2 8-3 12-1l6 4 2 2-4 1-6 4-6 6H0z" fill="#1c1b22"/><path d="M19 28c1-5 6-8 10-11l2 8c3 2 4 6 3 10l-2 8-8 4-5-8z" fill="#3d6fc8"/><path d="M20 32c3-2 10-2 13 0l-1 8-5 6-6-6z" fill="#8da0b8"/><ellipse cx="24" cy="33.4" rx="1.6" ry="1.2" fill="#f3c24a"/><ellipse cx="31" cy="33.8" rx="1.4" ry="1.2" fill="#f3c24a"/><path d="M2 46c6-2 10-2 14-4l6 2 8 0 6 4 6 12H8z" fill="#15181f"/><path d="M19 42c3 3 8 4 12 2l1 3c-4 2-10 1-14-2z" fill="#2c5aa8"/></g></g></svg>
<div class="nm" style="left:969px;top:634.15px;width:116.4px;height:23.3px"></div>
<svg style="left:971px;top:637.55px" width="18" height="19" viewBox="0 0 16 16" preserveAspectRatio="none"><rect x="5.6" y="1.6" width="4.8" height="8" rx="2.4" fill="#f2f2f2"/><path d="M3.2 7.6a4.8 4.8 0 0 0 9.6 0M8 12.4V14.6M5.6 14.6h4.8" fill="none" stroke="#f2f2f2" stroke-width="1.1"/><path d="M2 13.4 14 2.2" stroke="#1b1c1e" stroke-width="2.6"/><path d="M2 13.4 14 2.2" stroke="#f0453a" stroke-width="1.2"/></svg>
<div class="t" style="left:993px;top:637.75px;height:20px;line-height:20px;font-size:13.3px;color:#fafafa;font-weight:300;font-family:'Noto Sans CJK SC','Liberation Sans',sans-serif;">2020级张志崴</div>
<div class="tile" style="left:967px;top:669.2px;width:188px;height:104.3px"></div>
<svg style="left:1031px;top:679.1px" width="60" height="60" viewBox="0 0 60 60"><clipPath id="av6"><circle cx="30" cy="30" r="29.3"/></clipPath><filter id="ab6" x="-10%" y="-10%" width="120%" height="120%"><feGaussianBlur stdDeviation="0.8"/></filter><g clip-path="url(#av6)"><g filter="url(#ab6)"><rect x="-5" y="-5" width="70" height="70" fill="#6f7477"/><path d="M8 -2h52v16H8z" fill="#d3d6d9"/><path d="M40 0v14" stroke="#aab0b4" stroke-width="1.2"/><path d="M34 14h26v9H34z" fill="#8a5d34"/><path d="M34 18h26" stroke="#5c4630" stroke-width="1.5"/><path d="M20 13c2-3 6-3 8 0v6h-8z" fill="#5a4a40"/><path d="M40 22c3-3 9-3 11 1l-1 10-10-2z" fill="#22242a"/><path d="M52 17c3-2 7-1 9 3v16l-6 1-3-12z" fill="#6e6b4e"/><path d="M55.5 32h6v12h-6z" fill="#d6552a"/><path d="M0 25h9v9H0z" fill="#a83a3c"/><path d="M0 34h12v10H0z" fill="#7d8286"/><path d="M-2 44h44v20H-2z" fill="#666b6e"/><path d="M3 42.5h16v2.6H3z" fill="#b5373a"/><path d="M16 44v18M28 40v22M20 52h26" stroke="#565b5e" stroke-width="1.3"/><path d="M22 44l4 3" stroke="#58b04a" stroke-width="2"/><path d="M11 28 43 21c6 3 10 8 10.5 14l-1.5 16-8 2.5-4.5-10H18z" fill="#c8a36b"/><path d="M40 30c5 3 8 9 8 16l-4 6-6-10z" fill="#b8935c"/><circle cx="13.5" cy="18" r="11.8" fill="#caa56d"/><path d="M4 24c4 5 12 6 18 3" stroke="#b48f58" stroke-width="2" fill="none"/><ellipse cx="16" cy="14.5" rx="4" ry="2.6" fill="#a8844f"/><path d="M15 28.5h12v5H15z" fill="#b03436"/><path d="M14 33.5h14l-1 9H16z" fill="#8b7b5e"/><path d="M27 25c4-1 8 0 11 3l2 9-5 5-8-6z" fill="#d2ad75"/></g></g></svg>
<div class="nm" style="left:969px;top:748.2px;width:116.4px;height:23.3px"></div>
<svg style="left:971px;top:751.6px" width="18" height="19" viewBox="0 0 16 16" preserveAspectRatio="none"><rect x="5.6" y="1.6" width="4.8" height="8" rx="2.4" fill="#f2f2f2"/><path d="M3.2 7.6a4.8 4.8 0 0 0 9.6 0M8 12.4V14.6M5.6 14.6h4.8" fill="none" stroke="#f2f2f2" stroke-width="1.1"/><path d="M2 13.4 14 2.2" stroke="#1b1c1e" stroke-width="2.6"/><path d="M2 13.4 14 2.2" stroke="#f0453a" stroke-width="1.2"/></svg>
<div class="t" style="left:993px;top:751.8000000000001px;height:20px;line-height:20px;font-size:13.3px;color:#fafafa;font-weight:300;font-family:'Noto Sans CJK SC','Liberation Sans',sans-serif;">2021级徐美慧</div>
<div style="left:966px;top:782px;width:190px;height:1.5px;background:#5a5e62;"></div>
<div style="left:17px;top:753px;width:159px;height:32px;background:#1c1e21;border-radius:4px"></div>
<svg style="left:27px;top:759px" width="20" height="20" viewBox="0 0 20 20"><circle cx="10" cy="10" r="9" fill="#fff"/><circle cx="6.6" cy="7.6" r="1.4" fill="#1c1e21"/><circle cx="13.4" cy="7.6" r="1.4" fill="#1c1e21"/><path d="M4.5 10.5h11a5.5 5.5 0 0 1-11 0z" fill="#1c1e21"/></svg>
<div style="left:55px;top:758px;width:1px;height:22px;background:#5b5e62;"></div>
<div class="t" style="left:64px;top:759.8px;height:20px;line-height:20px;font-size:13px;color:#b7b9bc;font-weight:400;">说点什么<span style="letter-spacing:-0.6px">...</span></div>
<div style="left:143px;top:758px;width:1px;height:22px;background:#5b5e62;"></div>
<svg style="left:153px;top:763px" width="12" height="12" viewBox="0 0 12 12"><path d="M8 1.5 3.5 6 8 10.5" fill="none" stroke="#fff" stroke-width="1.6"/></svg>
</div>
</body>
</html>
